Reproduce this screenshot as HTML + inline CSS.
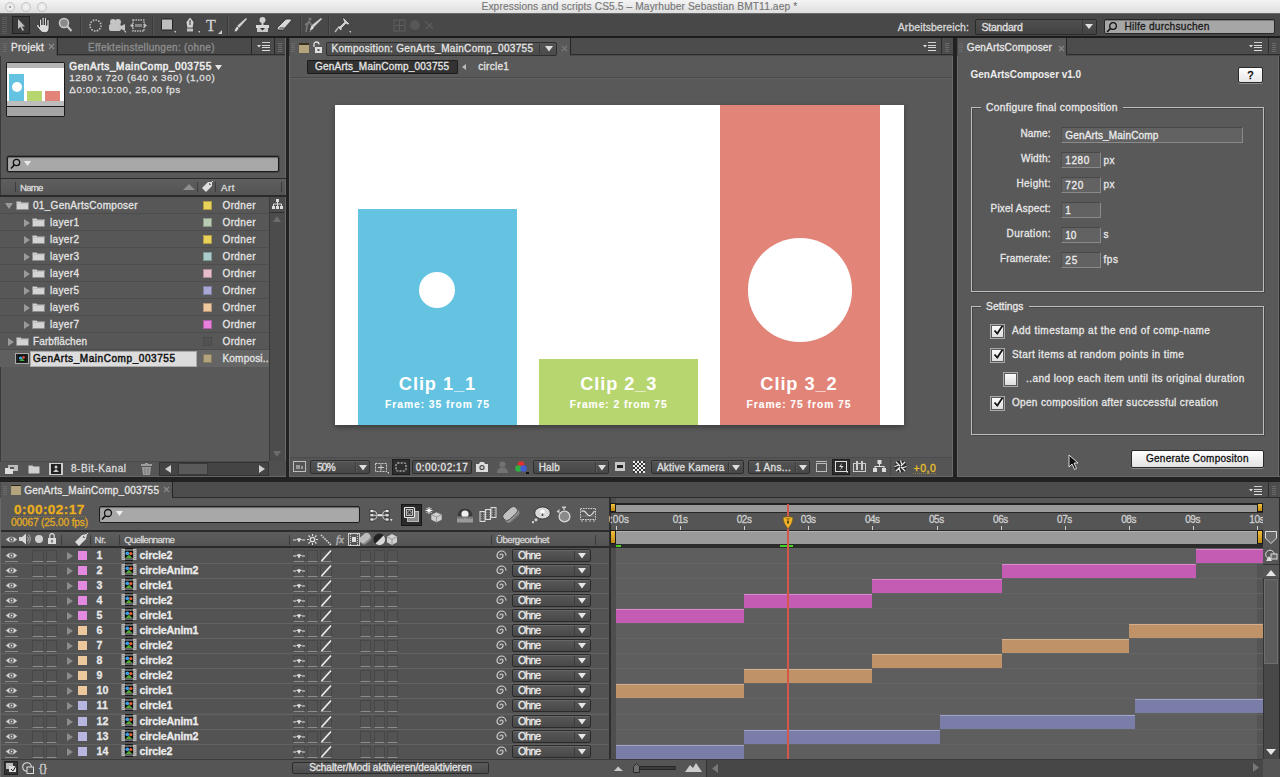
<!DOCTYPE html><html><head><meta charset="utf-8"><style>
html,body{margin:0;padding:0}
body{width:1280px;height:777px;overflow:hidden;background:#222222;position:relative;font-family:"Liberation Sans",sans-serif}
div,svg{position:absolute}
.t{white-space:nowrap;-webkit-text-stroke:0.3px}
</style></head><body>
<div style="left:0px;top:0px;width:1280px;height:13px;background:linear-gradient(#f4f4f4,#dedede);"></div>
<div style="left:0px;top:13px;width:1280px;height:1px;background:#6a6a6a;"></div>
<div class="t" style="left:481.50px;top:1.97px;font-size:10.2px;line-height:10.2px;color:#777777;letter-spacing:0.116px;-webkit-text-stroke:0.15px;">Expressions and scripts CS5.5 – Mayrhuber Sebastian BMT11.aep *</div>
<div style="left:5px;top:2px;width:8px;height:8px;border-radius:50%;border:1px solid #c4c4c4;background:radial-gradient(#f2f2f2,#e2e2e2)"></div>
<div style="left:21px;top:2px;width:8px;height:8px;border-radius:50%;border:1px solid #c4c4c4;background:radial-gradient(#f2f2f2,#e2e2e2)"></div>
<div style="left:37px;top:2px;width:8px;height:8px;border-radius:50%;border:1px solid #c4c4c4;background:radial-gradient(#f2f2f2,#e2e2e2)"></div>
<div style="left:9px;top:6px;width:2px;height:2px;border-radius:50%;background:#888"></div>
<div style="left:0px;top:14px;width:1280px;height:23px;background:#484848;"></div>
<div style="left:0px;top:36px;width:1280px;height:2px;background:#1c1c1c;"></div>
<div style="left:2px;top:17px;width:5px;height:1px;background:#5c5c5c;"></div>
<div style="left:2px;top:19px;width:5px;height:1px;background:#5c5c5c;"></div>
<div style="left:2px;top:21px;width:5px;height:1px;background:#5c5c5c;"></div>
<div style="left:2px;top:23px;width:5px;height:1px;background:#5c5c5c;"></div>
<div style="left:2px;top:25px;width:5px;height:1px;background:#5c5c5c;"></div>
<div style="left:2px;top:27px;width:5px;height:1px;background:#5c5c5c;"></div>
<div style="left:2px;top:29px;width:5px;height:1px;background:#5c5c5c;"></div>
<div style="left:2px;top:31px;width:5px;height:1px;background:#5c5c5c;"></div>
<div style="left:2px;top:33px;width:5px;height:1px;background:#5c5c5c;"></div>
<div style="left:80px;top:16px;width:1px;height:19px;background:#3a3a3a;"></div>
<div style="left:81px;top:16px;width:1px;height:19px;background:#555;"></div>
<div style="left:152px;top:16px;width:1px;height:19px;background:#3a3a3a;"></div>
<div style="left:153px;top:16px;width:1px;height:19px;background:#555;"></div>
<div style="left:227px;top:16px;width:1px;height:19px;background:#3a3a3a;"></div>
<div style="left:228px;top:16px;width:1px;height:19px;background:#555;"></div>
<div style="left:300px;top:16px;width:1px;height:19px;background:#3a3a3a;"></div>
<div style="left:301px;top:16px;width:1px;height:19px;background:#555;"></div>
<div style="left:328px;top:16px;width:1px;height:19px;background:#3a3a3a;"></div>
<div style="left:329px;top:16px;width:1px;height:19px;background:#555;"></div>
<div style="left:12px;top:16px;width:18px;height:18px;background:#3a3a3a;border:1px solid #222;box-sizing:border-box;"></div>
<svg style="left:17px;top:19px;" width="10" height="13" viewBox="0 0 10 13"><path d="M1 0 L1 10 L3.5 8 L5.5 12 L7 11 L5 7.5 L8 7.5 Z" fill="#bdbdbd"/></svg>
<svg style="left:35px;top:16px;" width="17" height="18" viewBox="0 0 17 18"><g fill="#dadada" stroke="#1e1e1e" stroke-width="0.8"><path d="M4.5 11 L4.5 4.2 Q4.5 3 5.7 3 Q6.9 3 6.9 4.2 L6.9 9 L6.9 2.2 Q6.9 1 8.1 1 Q9.3 1 9.3 2.2 L9.3 9 L9.3 2.8 Q9.3 1.6 10.5 1.6 Q11.7 1.6 11.7 2.8 L11.7 9.5 L11.7 4.5 Q11.7 3.4 12.9 3.4 Q14.1 3.4 14.1 4.5 L14.1 11.5 Q14.1 16.8 9.5 16.8 Q6.5 16.8 5 14.5 L1.6 10.2 Q1 9 2.2 8.6 Q3.2 8.3 4.5 10 Z"/></g></svg>
<svg style="left:58px;top:17px;" width="15" height="17" viewBox="0 0 15 17"><circle cx="6" cy="6" r="4.5" fill="#8a8a8a" stroke="#c8c8c8" stroke-width="1.6"/><path d="M9 9 L13.5 14" stroke="#c8c8c8" stroke-width="2"/></svg>
<svg style="left:88px;top:17px;" width="15" height="17" viewBox="0 0 15 17"><circle cx="7.5" cy="8.5" r="5.5" fill="none" stroke="#bbb" stroke-width="1.6" stroke-dasharray="1.6 1.2"/></svg>
<svg style="left:108px;top:17px;" width="19" height="17" viewBox="0 0 19 17"><circle cx="5" cy="5" r="3" fill="#c4c4c4"/><circle cx="10" cy="5" r="3" fill="#c4c4c4"/><rect x="1" y="7" width="12" height="7" rx="2" fill="#c4c4c4"/><path d="M13 9 L17 7 L17 14 L13 12 Z" fill="#c4c4c4"/><path d="M16 14 L18 14 L18 16 Z" fill="#ccc"/></svg>
<svg style="left:130px;top:17px;" width="17" height="17" viewBox="0 0 17 17"><rect x="3" y="3" width="11" height="11" fill="none" stroke="#bbb" stroke-width="1.4" stroke-dasharray="1.5 1"/><rect x="5" y="7" width="7" height="3" fill="#888"/><path d="M0 8.5 L3 6 L3 11 Z M17 8.5 L14 6 L14 11 Z" fill="#bbb"/></svg>
<svg style="left:160px;top:17px;" width="17" height="17" viewBox="0 0 17 17"><rect x="1.5" y="2" width="11" height="11" rx="1" fill="#bdbdbd" stroke="#222" stroke-width="1"/><path d="M14 14 L16 14 L16 16 Z" fill="#ccc"/></svg>
<svg style="left:184px;top:16px;" width="17" height="18" viewBox="0 0 17 18"><path d="M6 1 L10 6 L9 12 L3 12 L2 6 Z" fill="#d0d0d0" stroke="#222" stroke-width="0.6"/><rect x="3" y="12.5" width="6" height="3" fill="#c0c0c0"/><path d="M6 4 L6 9" stroke="#333" stroke-width="1"/><path d="M14 15 L16 15 L16 17 Z" fill="#ccc"/></svg>
<div class="t" style="left:206.00px;top:18.46px;font-size:16px;line-height:16px;color:#d0d0d0;font-family:'Liberation Serif',serif;">T</div>
<svg style="left:218px;top:30px;" width="4" height="4" viewBox="0 0 4 4"><path d="M0 4 L4 4 L4 0 Z" fill="#ccc"/></svg>
<svg style="left:233px;top:17px;" width="15" height="17" viewBox="0 0 15 17"><path d="M13 1 L14 2 L6 11 L4 9 Z" fill="#d0d0d0"/><path d="M4 9 L6 11 Q5 15 1 15 Q2 11 4 9 Z" fill="#e0e0e0" stroke="#222" stroke-width="0.5"/></svg>
<svg style="left:255px;top:16px;" width="15" height="18" viewBox="0 0 15 18"><circle cx="7.5" cy="4" r="3" fill="#d0d0d0"/><rect x="6.5" y="6" width="2" height="3" fill="#ccc"/><rect x="1" y="9" width="13" height="3" fill="#d8d8d8"/><path d="M2 12 L13 12 L13 16 L2 16 Z" fill="#c8c8c8"/><path d="M5 12 L10 12 L7.5 14.5 Z" fill="#333"/></svg>
<svg style="left:276px;top:18px;" width="17" height="14" viewBox="0 0 17 14"><path d="M1 10 L9 2 Q10 1 11 1 L15 1 Q16 2 15 3 L7 12 L2 12 Z" fill="#d8d8d8" stroke="#222" stroke-width="0.7"/><path d="M2 12 L7 12 L9 9 L4 9 Z" fill="#888"/></svg>
<svg style="left:304px;top:16px;" width="19" height="18" viewBox="0 0 19 18"><circle cx="6" cy="3" r="1.6" fill="#777"/><path d="M5 5 L3 10 L2 16 M5 5 L8 10 L6 16 M5 6 L1 9" stroke="#777" stroke-width="1.6" fill="none"/><path d="M17 2 L18 3 L10 11 L8 9 Z" fill="#d0d0d0"/><path d="M8 9 L10 11 Q9 14 6 14 Q7 11 8 9 Z" fill="#e0e0e0"/></svg>
<svg style="left:334px;top:16px;" width="18" height="18" viewBox="0 0 18 18"><path d="M9 1 L16 8 L14 9 L12 8 L8 12 L8 14 L7 15 L3 11 L4 10 L6 10 L10 6 L9 4 Z" fill="#d0d0d0" stroke="#222" stroke-width="0.6"/><path d="M4 12 L1 16" stroke="#bbb" stroke-width="1.4"/><path d="M15 15 L17 15 L17 17 Z" fill="#ccc"/></svg>
<svg style="left:393px;top:19px;" width="13" height="13" viewBox="0 0 13 13"><rect x="1" y="1" width="11" height="11" fill="none" stroke="#5e5e5e"/><path d="M6.5 2 L6.5 11 M2 6.5 L11 6.5" stroke="#5e5e5e"/></svg>
<svg style="left:409px;top:19px;" width="12" height="12" viewBox="0 0 12 12"><circle cx="6" cy="6" r="5" fill="#575757"/></svg>
<svg style="left:423px;top:19px;" width="12" height="13" viewBox="0 0 12 13"><path d="M2 2 L10 10 M3 10 L9 4" stroke="#5a5a5a" stroke-width="1.6"/></svg>
<div class="t" style="left:897.80px;top:21.51px;font-size:10.5px;line-height:10.5px;color:#d8d8d8;letter-spacing:0.069px;">Arbeitsbereich:</div>
<div style="left:975px;top:19px;width:122px;height:16px;background:linear-gradient(#4f4f4f,#434343);border:1px solid #2a2a2a;box-sizing:border-box;border-radius:2px;"></div>
<div style="left:1082px;top:20px;width:1px;height:14px;background:#383838;"></div>
<div class="t" style="left:981.40px;top:21.51px;font-size:10.5px;line-height:10.5px;color:#e0e0e0;letter-spacing:-0.176px;">Standard</div>
<svg style="left:1085px;top:24px;" width="9" height="6" viewBox="0 0 9 6"><path d="M0 0 L8 0 L4 5 Z" fill="#e0e0e0"/></svg>
<div style="left:1104px;top:19px;width:171px;height:15px;background:#a6a6a6;border:1px solid #262626;box-sizing:border-box;border-radius:2px;box-shadow:inset 0 1px 0 #7a7a7a;"></div>
<svg style="left:1106px;top:21px;" width="12" height="12" viewBox="0 0 12 12"><circle cx="7" cy="5" r="3.3" fill="none" stroke="#111" stroke-width="1.3"/><path d="M4.5 7.5 L1 11" stroke="#111" stroke-width="1.6"/></svg>
<div class="t" style="left:1124.50px;top:21.77px;font-size:10.2px;line-height:10.2px;color:#1a1a1a;letter-spacing:0.209px;">Hilfe durchsuchen</div>
<div style="left:0px;top:38px;width:286px;height:439px;background:#595959;"></div>
<div style="left:0px;top:38px;width:286px;height:18px;background:#4a4a4a;"></div>
<div style="left:0px;top:38px;width:56px;height:18px;background:#595959;"></div>
<div style="left:3px;top:43px;width:4px;height:1px;background:#6a6a6a;"></div>
<div style="left:3px;top:45px;width:4px;height:1px;background:#6a6a6a;"></div>
<div style="left:3px;top:47px;width:4px;height:1px;background:#6a6a6a;"></div>
<div style="left:3px;top:49px;width:4px;height:1px;background:#6a6a6a;"></div>
<div style="left:3px;top:51px;width:4px;height:1px;background:#6a6a6a;"></div>
<div class="t" style="left:11.00px;top:43.14px;font-size:10px;line-height:10px;color:#e6e6e6;letter-spacing:0.283px;">Projekt</div>
<svg style="left:48px;top:43px;" width="7" height="7" viewBox="0 0 7 7"><path d="M1 1 L6 6 M6 1 L1 6" stroke="#8c8c8c" stroke-width="1.1"/></svg>
<div style="left:57px;top:38px;width:194px;height:17px;background:#4a4a4a;border-left:1px solid #242424;border-bottom:1px solid #2c2c2c;box-sizing:border-box;"></div>
<div class="t" style="left:88.00px;top:43.14px;font-size:10px;line-height:10px;color:#8e8e8e;letter-spacing:0.296px;">Effekteinstellungen: (ohne)</div>
<div style="left:251px;top:38px;width:24px;height:17px;background:#4b4b4b;border-left:1px solid #282828;border-right:1px solid #282828;border-bottom:1px solid #2c2c2c;box-sizing:border-box;"></div>
<svg style="left:257px;top:42px;" width="14" height="10" viewBox="0 0 14 10"><path d="M0 3 L4 3 L2 5.5 Z" fill="#e0e0e0"/><rect x="5" y="0" width="8" height="1" fill="#cfcfcf"/><rect x="5" y="3" width="8" height="1" fill="#d8d8d8"/><rect x="5" y="5" width="8" height="1" fill="#d8d8d8"/><rect x="5" y="8" width="8" height="1" fill="#e0e0e0"/></svg>
<div style="left:275px;top:38px;width:11px;height:17px;background:#4b4b4b;border-bottom:1px solid #2c2c2c;box-sizing:border-box;"></div>
<div style="left:278px;top:43px;width:4px;height:1px;background:#6a6a6a;"></div>
<div style="left:278px;top:45px;width:4px;height:1px;background:#6a6a6a;"></div>
<div style="left:278px;top:47px;width:4px;height:1px;background:#6a6a6a;"></div>
<div style="left:278px;top:49px;width:4px;height:1px;background:#6a6a6a;"></div>
<div style="left:278px;top:51px;width:4px;height:1px;background:#6a6a6a;"></div>
<div style="left:285px;top:38px;width:1px;height:439px;background:#6a6a6a;"></div>
<div style="left:0px;top:56px;width:1px;height:421px;background:#3a3a3a;"></div>
<div style="left:6px;top:62px;width:59px;height:55px;background:#1a1a1a;border-radius:2px;"></div>
<div style="left:7px;top:63px;width:57px;height:5px;background:#b4b4b4;"></div>
<div style="left:7px;top:68px;width:57px;height:33px;background:#ffffff;"></div>
<div style="left:9px;top:74px;width:15px;height:27px;background:#63c3e0;"></div>
<div style="left:27px;top:91px;width:15px;height:10px;background:#b8d670;"></div>
<div style="left:45px;top:91px;width:15px;height:10px;background:#e28578;"></div>
<div style="left:11.5px;top:82px;width:10px;height:10px;border-radius:50%;background:#fff"></div>
<div style="left:7px;top:101px;width:57px;height:5px;background:#bdbdbd;"></div>
<div style="left:7px;top:107px;width:57px;height:9px;background:#a4a4a4;"></div>
<div class="t" style="left:69.30px;top:61.73px;font-size:10px;line-height:10px;color:#ececec;letter-spacing:0.566px;-webkit-text-stroke:0.55px;">GenArts_MainComp_003755</div>
<svg style="left:215px;top:65px;" width="7" height="5" viewBox="0 0 7 5"><path d="M0 0 L7 0 L3.5 5 Z" fill="#e6e6e6"/></svg>
<div class="t" style="left:69.30px;top:73.20px;font-size:9.8px;line-height:9.8px;color:#dedede;letter-spacing:0.582px;">1280 x 720 (640 x 360) (1,00)</div>
<div class="t" style="left:69.30px;top:84.60px;font-size:9.8px;line-height:9.8px;color:#dedede;letter-spacing:0.589px;">Δ0:00:10:00, 25,00 fps</div>
<div style="left:6px;top:155px;width:274px;height:18px;background:#444;border-radius:3px;"></div>
<div style="left:7px;top:156px;width:272px;height:16px;background:#a8a8a8;border:1px solid #1c1c1c;box-sizing:border-box;border-radius:2px;box-shadow:inset 0 1px 1px #666;"></div>
<svg style="left:10px;top:158px;" width="11" height="12" viewBox="0 0 11 12"><circle cx="6.5" cy="4.5" r="3.2" fill="none" stroke="#111" stroke-width="1.3"/><path d="M4.2 7 L1 10.5" stroke="#111" stroke-width="1.6"/></svg>
<svg style="left:24px;top:161px;" width="7" height="5" viewBox="0 0 7 5"><path d="M0 0 L7 0 L3.5 5 Z" fill="#e8e8e8"/></svg>
<div style="left:0px;top:178px;width:286px;height:1px;background:#2a2a2a;"></div>
<div style="left:1px;top:179px;width:284px;height:16px;background:linear-gradient(#5e5e5e,#545454);"></div>
<div style="left:0px;top:195px;width:286px;height:2px;background:#2b2b2b;"></div>
<div style="left:15px;top:182px;width:1px;height:10px;background:#3c3c3c;"></div>
<div class="t" style="left:20.00px;top:182.87px;font-size:9.6px;line-height:9.6px;color:#dcdcdc;letter-spacing:-0.711px;">Name</div>
<svg style="left:183px;top:183px;" width="12" height="7" viewBox="0 0 12 7"><path d="M0 7 L6 1 L12 7 Z" fill="#8e8e8e"/></svg>
<div style="left:197px;top:182px;width:1px;height:10px;background:#3c3c3c;"></div>
<svg style="left:200px;top:180px;" width="14" height="14" viewBox="0 0 14 14"><path d="M2 8 L8 2 L12 2 L12 6 L6 12 Z" fill="#dedede"/><circle cx="10" cy="4" r="1" fill="#555"/><path d="M10 4 L13 1" stroke="#ddd"/></svg>
<div style="left:215px;top:182px;width:1px;height:10px;background:#3c3c3c;"></div>
<div class="t" style="left:221.00px;top:182.87px;font-size:9.6px;line-height:9.6px;color:#dcdcdc;letter-spacing:0.606px;">Art</div>
<div style="left:281px;top:182px;width:1px;height:10px;background:#3c3c3c;"></div>
<div style="left:0px;top:197px;width:269px;height:17px;background:#575757;"></div>
<div style="left:0px;top:213px;width:269px;height:1px;background:#4d4d4d;"></div>
<svg style="left:5px;top:203px;" width="8" height="6" viewBox="0 0 8 6"><path d="M0 0 L8 0 L4 6 Z" fill="#9a9a9a"/></svg>
<svg style="left:16px;top:200px;" width="13" height="10" viewBox="0 0 13 10"><path d="M0.5 1.5 L4.5 1.5 L5.5 2.5 L12.5 2.5 L12.5 9.5 L0.5 9.5 Z" fill="#d4d4d4" stroke="#8c8c8c" stroke-width="0.8"/><path d="M0.5 3.5 L12.5 3.5" stroke="#bbb" stroke-width="0.8"/></svg>
<div class="t" style="left:33.00px;top:200.73px;font-size:10px;line-height:10px;color:#e4e4e4;letter-spacing:0.294px;">01_GenArtsComposer</div>
<div style="left:203px;top:201px;width:9px;height:9px;background:#e8d25a;border:1px solid rgba(0,0,0,0.25);box-sizing:border-box;"></div>
<div class="t" style="left:222.50px;top:200.73px;font-size:10px;line-height:10px;color:#e4e4e4;letter-spacing:0.380px;">Ordner</div>
<div style="left:0px;top:214px;width:269px;height:17px;background:#575757;"></div>
<div style="left:0px;top:230px;width:269px;height:1px;background:#4d4d4d;"></div>
<svg style="left:24px;top:219px;" width="6" height="8" viewBox="0 0 6 8"><path d="M0 0 L6 4 L0 8 Z" fill="#9a9a9a"/></svg>
<svg style="left:32px;top:217px;" width="13" height="10" viewBox="0 0 13 10"><path d="M0.5 1.5 L4.5 1.5 L5.5 2.5 L12.5 2.5 L12.5 9.5 L0.5 9.5 Z" fill="#d4d4d4" stroke="#8c8c8c" stroke-width="0.8"/><path d="M0.5 3.5 L12.5 3.5" stroke="#bbb" stroke-width="0.8"/></svg>
<div class="t" style="left:50.00px;top:217.73px;font-size:10px;line-height:10px;color:#e4e4e4;letter-spacing:0.350px;">layer1</div>
<div style="left:203px;top:218px;width:9px;height:9px;background:#b8cbb3;border:1px solid rgba(0,0,0,0.25);box-sizing:border-box;"></div>
<div class="t" style="left:222.50px;top:217.73px;font-size:10px;line-height:10px;color:#e4e4e4;letter-spacing:0.380px;">Ordner</div>
<div style="left:0px;top:231px;width:269px;height:17px;background:#575757;"></div>
<div style="left:0px;top:247px;width:269px;height:1px;background:#4d4d4d;"></div>
<svg style="left:24px;top:236px;" width="6" height="8" viewBox="0 0 6 8"><path d="M0 0 L6 4 L0 8 Z" fill="#9a9a9a"/></svg>
<svg style="left:32px;top:234px;" width="13" height="10" viewBox="0 0 13 10"><path d="M0.5 1.5 L4.5 1.5 L5.5 2.5 L12.5 2.5 L12.5 9.5 L0.5 9.5 Z" fill="#d4d4d4" stroke="#8c8c8c" stroke-width="0.8"/><path d="M0.5 3.5 L12.5 3.5" stroke="#bbb" stroke-width="0.8"/></svg>
<div class="t" style="left:50.00px;top:234.73px;font-size:10px;line-height:10px;color:#e4e4e4;letter-spacing:0.350px;">layer2</div>
<div style="left:203px;top:235px;width:9px;height:9px;background:#e8d25a;border:1px solid rgba(0,0,0,0.25);box-sizing:border-box;"></div>
<div class="t" style="left:222.50px;top:234.73px;font-size:10px;line-height:10px;color:#e4e4e4;letter-spacing:0.380px;">Ordner</div>
<div style="left:0px;top:248px;width:269px;height:17px;background:#575757;"></div>
<div style="left:0px;top:264px;width:269px;height:1px;background:#4d4d4d;"></div>
<svg style="left:24px;top:253px;" width="6" height="8" viewBox="0 0 6 8"><path d="M0 0 L6 4 L0 8 Z" fill="#9a9a9a"/></svg>
<svg style="left:32px;top:251px;" width="13" height="10" viewBox="0 0 13 10"><path d="M0.5 1.5 L4.5 1.5 L5.5 2.5 L12.5 2.5 L12.5 9.5 L0.5 9.5 Z" fill="#d4d4d4" stroke="#8c8c8c" stroke-width="0.8"/><path d="M0.5 3.5 L12.5 3.5" stroke="#bbb" stroke-width="0.8"/></svg>
<div class="t" style="left:50.00px;top:251.73px;font-size:10px;line-height:10px;color:#e4e4e4;letter-spacing:0.350px;">layer3</div>
<div style="left:203px;top:252px;width:9px;height:9px;background:#a9cdc8;border:1px solid rgba(0,0,0,0.25);box-sizing:border-box;"></div>
<div class="t" style="left:222.50px;top:251.73px;font-size:10px;line-height:10px;color:#e4e4e4;letter-spacing:0.380px;">Ordner</div>
<div style="left:0px;top:265px;width:269px;height:17px;background:#575757;"></div>
<div style="left:0px;top:281px;width:269px;height:1px;background:#4d4d4d;"></div>
<svg style="left:24px;top:270px;" width="6" height="8" viewBox="0 0 6 8"><path d="M0 0 L6 4 L0 8 Z" fill="#9a9a9a"/></svg>
<svg style="left:32px;top:268px;" width="13" height="10" viewBox="0 0 13 10"><path d="M0.5 1.5 L4.5 1.5 L5.5 2.5 L12.5 2.5 L12.5 9.5 L0.5 9.5 Z" fill="#d4d4d4" stroke="#8c8c8c" stroke-width="0.8"/><path d="M0.5 3.5 L12.5 3.5" stroke="#bbb" stroke-width="0.8"/></svg>
<div class="t" style="left:50.00px;top:268.74px;font-size:10px;line-height:10px;color:#e4e4e4;letter-spacing:0.350px;">layer4</div>
<div style="left:203px;top:269px;width:9px;height:9px;background:#e7bdc9;border:1px solid rgba(0,0,0,0.25);box-sizing:border-box;"></div>
<div class="t" style="left:222.50px;top:268.74px;font-size:10px;line-height:10px;color:#e4e4e4;letter-spacing:0.380px;">Ordner</div>
<div style="left:0px;top:282px;width:269px;height:17px;background:#575757;"></div>
<div style="left:0px;top:298px;width:269px;height:1px;background:#4d4d4d;"></div>
<svg style="left:24px;top:287px;" width="6" height="8" viewBox="0 0 6 8"><path d="M0 0 L6 4 L0 8 Z" fill="#9a9a9a"/></svg>
<svg style="left:32px;top:285px;" width="13" height="10" viewBox="0 0 13 10"><path d="M0.5 1.5 L4.5 1.5 L5.5 2.5 L12.5 2.5 L12.5 9.5 L0.5 9.5 Z" fill="#d4d4d4" stroke="#8c8c8c" stroke-width="0.8"/><path d="M0.5 3.5 L12.5 3.5" stroke="#bbb" stroke-width="0.8"/></svg>
<div class="t" style="left:50.00px;top:285.74px;font-size:10px;line-height:10px;color:#e4e4e4;letter-spacing:0.350px;">layer5</div>
<div style="left:203px;top:286px;width:9px;height:9px;background:#a8a8d6;border:1px solid rgba(0,0,0,0.25);box-sizing:border-box;"></div>
<div class="t" style="left:222.50px;top:285.74px;font-size:10px;line-height:10px;color:#e4e4e4;letter-spacing:0.380px;">Ordner</div>
<div style="left:0px;top:299px;width:269px;height:17px;background:#575757;"></div>
<div style="left:0px;top:315px;width:269px;height:1px;background:#4d4d4d;"></div>
<svg style="left:24px;top:304px;" width="6" height="8" viewBox="0 0 6 8"><path d="M0 0 L6 4 L0 8 Z" fill="#9a9a9a"/></svg>
<svg style="left:32px;top:302px;" width="13" height="10" viewBox="0 0 13 10"><path d="M0.5 1.5 L4.5 1.5 L5.5 2.5 L12.5 2.5 L12.5 9.5 L0.5 9.5 Z" fill="#d4d4d4" stroke="#8c8c8c" stroke-width="0.8"/><path d="M0.5 3.5 L12.5 3.5" stroke="#bbb" stroke-width="0.8"/></svg>
<div class="t" style="left:50.00px;top:302.74px;font-size:10px;line-height:10px;color:#e4e4e4;letter-spacing:0.350px;">layer6</div>
<div style="left:203px;top:303px;width:9px;height:9px;background:#efc79d;border:1px solid rgba(0,0,0,0.25);box-sizing:border-box;"></div>
<div class="t" style="left:222.50px;top:302.74px;font-size:10px;line-height:10px;color:#e4e4e4;letter-spacing:0.380px;">Ordner</div>
<div style="left:0px;top:316px;width:269px;height:17px;background:#575757;"></div>
<div style="left:0px;top:332px;width:269px;height:1px;background:#4d4d4d;"></div>
<svg style="left:24px;top:321px;" width="6" height="8" viewBox="0 0 6 8"><path d="M0 0 L6 4 L0 8 Z" fill="#9a9a9a"/></svg>
<svg style="left:32px;top:319px;" width="13" height="10" viewBox="0 0 13 10"><path d="M0.5 1.5 L4.5 1.5 L5.5 2.5 L12.5 2.5 L12.5 9.5 L0.5 9.5 Z" fill="#d4d4d4" stroke="#8c8c8c" stroke-width="0.8"/><path d="M0.5 3.5 L12.5 3.5" stroke="#bbb" stroke-width="0.8"/></svg>
<div class="t" style="left:50.00px;top:319.74px;font-size:10px;line-height:10px;color:#e4e4e4;letter-spacing:0.350px;">layer7</div>
<div style="left:203px;top:320px;width:9px;height:9px;background:#e77fdc;border:1px solid rgba(0,0,0,0.25);box-sizing:border-box;"></div>
<div class="t" style="left:222.50px;top:319.74px;font-size:10px;line-height:10px;color:#e4e4e4;letter-spacing:0.380px;">Ordner</div>
<div style="left:0px;top:333px;width:269px;height:17px;background:#575757;"></div>
<div style="left:0px;top:349px;width:269px;height:1px;background:#4d4d4d;"></div>
<svg style="left:8px;top:338px;" width="6" height="8" viewBox="0 0 6 8"><path d="M0 0 L6 4 L0 8 Z" fill="#9a9a9a"/></svg>
<svg style="left:16px;top:336px;" width="13" height="10" viewBox="0 0 13 10"><path d="M0.5 1.5 L4.5 1.5 L5.5 2.5 L12.5 2.5 L12.5 9.5 L0.5 9.5 Z" fill="#d4d4d4" stroke="#8c8c8c" stroke-width="0.8"/><path d="M0.5 3.5 L12.5 3.5" stroke="#bbb" stroke-width="0.8"/></svg>
<div class="t" style="left:33.00px;top:336.74px;font-size:10px;line-height:10px;color:#e4e4e4;letter-spacing:0.120px;">Farbflächen</div>
<div style="left:203px;top:337px;width:9px;height:9px;background:#525252;border:1px solid #4a4a4a;box-sizing:border-box;"></div>
<div class="t" style="left:222.50px;top:336.74px;font-size:10px;line-height:10px;color:#e4e4e4;letter-spacing:0.380px;">Ordner</div>
<div style="left:0px;top:350px;width:269px;height:17px;background:#575757;"></div>
<div style="left:0px;top:366px;width:269px;height:1px;background:#4d4d4d;"></div>
<div style="left:0px;top:350px;width:269px;height:17px;background:#5f5f5f;"></div>
<div style="left:30px;top:351px;width:167px;height:16px;background:#dcdcdc;border:1px solid #aaa;box-sizing:border-box;"></div>
<div style="left:197px;top:350px;width:72px;height:17px;background:#656565;"></div>
<svg style="left:15px;top:353px;" width="14" height="11" viewBox="0 0 14 11"><rect x="0.5" y="0.5" width="13" height="10" fill="#222" stroke="#aaa"/><rect x="3" y="2" width="8" height="7" fill="#111"/><circle cx="5.5" cy="5" r="1.6" fill="#3ab0e0"/><circle cx="8.5" cy="4.5" r="1.4" fill="#e05040"/><path d="M4 8 L7 5.5 L10 8 Z" fill="#40b040"/></svg>
<div class="t" style="left:33.00px;top:353.74px;font-size:10px;line-height:10px;color:#111111;letter-spacing:0.566px;-webkit-text-stroke:0.45px;">GenArts_MainComp_003755</div>
<div style="left:203px;top:354px;width:9px;height:9px;background:#b3a47e;border:1px solid rgba(0,0,0,0.25);box-sizing:border-box;"></div>
<div class="t" style="left:222.50px;top:353.74px;font-size:10px;line-height:10px;color:#e4e4e4;letter-spacing:0.194px;">Komposi..</div>
<div style="left:269px;top:197px;width:16px;height:264px;background:#4c4c4c;border-left:1px solid #3a3a3a;box-sizing:border-box;"></div>
<svg style="left:272px;top:199px;" width="11" height="11" viewBox="0 0 11 11"><rect x="4" y="0" width="3" height="3" fill="#ddd"/><path d="M5.5 3 L5.5 5 M1.5 5 L9.5 5 M1.5 5 L1.5 7 M5.5 5 L5.5 7 M9.5 5 L9.5 7" stroke="#ddd"/><rect x="0" y="7" width="3" height="3" fill="#ddd"/><rect x="4" y="7" width="3" height="3" fill="#ddd"/><rect x="8" y="7" width="3" height="3" fill="#ddd"/></svg>
<div style="left:270px;top:212px;width:14px;height:1px;background:#2e2e2e;"></div>
<svg style="left:273px;top:216px;" width="8" height="6" viewBox="0 0 8 6"><path d="M0 6 L4 0 L8 6 Z" fill="#6c6c6c"/></svg>
<svg style="left:273px;top:451px;" width="8" height="6" viewBox="0 0 8 6"><path d="M0 0 L4 6 L8 0 Z" fill="#6c6c6c"/></svg>
<div style="left:0px;top:461px;width:286px;height:16px;background:#555;border-top:1px solid #4a4a4a;box-sizing:border-box;"></div>
<svg style="left:5px;top:464px;" width="14" height="10" viewBox="0 0 14 10"><rect x="3" y="1" width="10" height="6" fill="#bbb"/><rect x="0" y="4" width="8" height="6" fill="#ddd"/><rect x="5" y="3" width="4" height="2" fill="#555"/></svg>
<svg style="left:28px;top:464px;" width="12" height="10" viewBox="0 0 12 10"><path d="M0.5 1.5 L4.5 1.5 L5.5 2.5 L11.5 2.5 L11.5 9.5 L0.5 9.5 Z" fill="#cfcfcf"/></svg>
<svg style="left:49px;top:463px;" width="14" height="12" viewBox="0 0 14 12"><rect x="0" y="0" width="14" height="12" fill="#ccc"/><rect x="2" y="1" width="10" height="10" fill="#222"/><path d="M4 9 L7 6 L10 9 Z" fill="#ccc"/><circle cx="7" cy="4" r="1.5" fill="#ccc"/></svg>
<div class="t" style="left:71.00px;top:464.04px;font-size:10px;line-height:10px;color:#dcdcdc;letter-spacing:0.555px;">8-Bit-Kanal</div>
<svg style="left:141px;top:463px;" width="11" height="12" viewBox="0 0 11 12"><rect x="0" y="1" width="11" height="2" fill="#9c9c9c"/><rect x="4" y="0" width="3" height="1" fill="#9c9c9c"/><path d="M1 4 L10 4 L9 12 L2 12 Z" fill="#9c9c9c"/><path d="M4 5 L4 11 M7 5 L7 11" stroke="#777"/></svg>
<div style="left:159px;top:462px;width:110px;height:14px;background:#444;border:1px solid #333;box-sizing:border-box;"></div>
<svg style="left:165px;top:465px;" width="6" height="8" viewBox="0 0 6 8"><path d="M6 0 L0 4 L6 8 Z" fill="#d0d0d0"/></svg>
<div style="left:178px;top:463px;width:30px;height:12px;background:#5a5a5a;border:1px solid #3a3a3a;box-sizing:border-box;"></div>
<svg style="left:259px;top:465px;" width="6" height="8" viewBox="0 0 6 8"><path d="M0 0 L6 4 L0 8 Z" fill="#d0d0d0"/></svg>
<div style="left:269px;top:461px;width:16px;height:16px;background:#4f4f4f;"></div>
<div style="left:289px;top:38px;width:664px;height:439px;background:#595959;"></div>
<div style="left:289px;top:38px;width:1px;height:439px;background:#6a6a6a;"></div>
<div style="left:952px;top:38px;width:1px;height:439px;background:#6a6a6a;"></div>
<div style="left:289px;top:38px;width:664px;height:18px;background:#4a4a4a;"></div>
<div style="left:290px;top:38px;width:280px;height:18px;background:#595959;"></div>
<div style="left:570px;top:38px;width:383px;height:17px;background:#4c4c4c;border-left:1px solid #242424;border-bottom:1px solid #2c2c2c;box-sizing:border-box;"></div>
<div style="left:291px;top:43px;width:4px;height:1px;background:#6a6a6a;"></div>
<div style="left:291px;top:45px;width:4px;height:1px;background:#6a6a6a;"></div>
<div style="left:291px;top:47px;width:4px;height:1px;background:#6a6a6a;"></div>
<div style="left:291px;top:49px;width:4px;height:1px;background:#6a6a6a;"></div>
<div style="left:291px;top:51px;width:4px;height:1px;background:#6a6a6a;"></div>
<div style="left:299px;top:43px;width:10px;height:10px;background:#b3a47e;border-top:2px solid #3a3020;box-sizing:border-box;"></div>
<svg style="left:312px;top:41px;" width="10" height="13" viewBox="0 0 10 13"><path d="M2 6 L2 3.5 Q2 1 4.5 1 Q7 1 7 3.5" fill="none" stroke="#e0e0e0" stroke-width="1.3"/><rect x="3" y="6" width="7" height="6" fill="#e0e0e0"/><rect x="5.5" y="8" width="2" height="2" fill="#555"/></svg>
<div style="left:326px;top:42px;width:231px;height:14px;background:linear-gradient(#555,#4a4a4a);border:1px solid #2e2e2e;box-sizing:border-box;border-radius:2px;"></div>
<div style="left:539px;top:44px;width:1px;height:10px;background:#3a3a3a;"></div>
<svg style="left:545px;top:46px;" width="9" height="6" viewBox="0 0 9 6"><path d="M0 0 L8 0 L4 5.5 Z" fill="#e0e0e0"/></svg>
<div class="t" style="left:331.40px;top:43.83px;font-size:10px;line-height:10px;color:#e4e4e4;letter-spacing:0.329px;">Komposition: GenArts_MainComp_003755</div>
<svg style="left:561px;top:45px;" width="7" height="7" viewBox="0 0 7 7"><path d="M1 1 L6 6 M6 1 L1 6" stroke="#7a7a7a" stroke-width="1.1"/></svg>
<div style="left:941px;top:38px;width:1px;height:17px;background:#2a2a2a;"></div>
<svg style="left:923px;top:42px;" width="14" height="10" viewBox="0 0 14 10"><path d="M0 3 L4 3 L2 5.5 Z" fill="#e0e0e0"/><rect x="5" y="0" width="8" height="1" fill="#cfcfcf"/><rect x="5" y="3" width="8" height="1" fill="#d8d8d8"/><rect x="5" y="5" width="8" height="1" fill="#d8d8d8"/><rect x="5" y="8" width="8" height="1" fill="#e0e0e0"/></svg>
<div style="left:945px;top:43px;width:4px;height:1px;background:#6a6a6a;"></div>
<div style="left:945px;top:45px;width:4px;height:1px;background:#6a6a6a;"></div>
<div style="left:945px;top:47px;width:4px;height:1px;background:#6a6a6a;"></div>
<div style="left:945px;top:49px;width:4px;height:1px;background:#6a6a6a;"></div>
<div style="left:945px;top:51px;width:4px;height:1px;background:#6a6a6a;"></div>
<div style="left:307px;top:60px;width:151px;height:14px;background:#333;border:1px solid #1c1c1c;box-sizing:border-box;border-radius:1px;"></div>
<div class="t" style="left:315.00px;top:62.33px;font-size:10px;line-height:10px;color:#e6e6e6;letter-spacing:0.202px;">GenArts_MainComp_003755</div>
<svg style="left:462px;top:64px;" width="4" height="6" viewBox="0 0 4 6"><path d="M4 0 L0 3 L4 6 Z" fill="#bbb"/></svg>
<div class="t" style="left:478.30px;top:62.33px;font-size:10px;line-height:10px;color:#e6e6e6;letter-spacing:0.267px;">circle1</div>
<div style="left:290px;top:77px;width:662px;height:1px;background:#4a4a4a;"></div>
<div style="left:290px;top:78px;width:662px;height:1px;background:#626262;"></div>
<div style="left:335px;top:105px;width:569px;height:320px;background:#ffffff;box-shadow:0 2px 5px rgba(0,0,0,0.35);"></div>
<div style="left:358px;top:209px;width:159px;height:216px;background:#63c3e0;"></div>
<div style="left:539px;top:359px;width:159px;height:66px;background:#b8d670;"></div>
<div style="left:720px;top:105px;width:160px;height:320px;background:#e28578;"></div>
<div style="left:419.3px;top:272px;width:36px;height:36px;border-radius:50%;background:#fff"></div>
<div style="left:748.4px;top:238.4px;width:103.2px;height:103.2px;border-radius:50%;background:#fff"></div>
<div class="t" style="left:398.85px;top:375.39px;font-size:18.2px;line-height:18.2px;color:#ffffff;font-weight:bold;letter-spacing:0.929px;-webkit-text-stroke:0;">Clip 1_1</div>
<div class="t" style="left:385.00px;top:399.58px;font-size:10.3px;line-height:10.3px;color:#ffffff;font-weight:bold;letter-spacing:0.954px;-webkit-text-stroke:0.1px;">Frame: 35 from 75</div>
<div class="t" style="left:580.15px;top:375.39px;font-size:18.2px;line-height:18.2px;color:#ffffff;font-weight:bold;letter-spacing:0.929px;-webkit-text-stroke:0;">Clip 2_3</div>
<div class="t" style="left:569.80px;top:399.58px;font-size:10.3px;line-height:10.3px;color:#ffffff;font-weight:bold;letter-spacing:0.932px;-webkit-text-stroke:0.1px;">Frame: 2 from 75</div>
<div class="t" style="left:760.35px;top:375.39px;font-size:18.2px;line-height:18.2px;color:#ffffff;font-weight:bold;letter-spacing:0.929px;-webkit-text-stroke:0;">Clip 3_2</div>
<div class="t" style="left:746.50px;top:399.58px;font-size:10.3px;line-height:10.3px;color:#ffffff;font-weight:bold;letter-spacing:0.954px;-webkit-text-stroke:0.1px;">Frame: 75 from 75</div>
<div style="left:290px;top:457px;width:662px;height:1px;background:#4c4c4c;"></div>
<div style="left:290px;top:458px;width:662px;height:19px;background:#555;"></div>
<div style="left:290px;top:476px;width:662px;height:1px;background:#4a4a4a;"></div>
<svg style="left:293px;top:461px;" width="13" height="12" viewBox="0 0 13 12"><rect x="0.5" y="0.5" width="12" height="10" fill="none" stroke="#bdbdbd"/><rect x="3" y="4" width="4" height="4" fill="#999"/><rect x="8" y="5" width="2" height="3" fill="#999"/></svg>
<div style="left:310px;top:460px;width:60px;height:14px;background:linear-gradient(#535353,#474747);border:1px solid #2e2e2e;box-sizing:border-box;border-radius:2px;box-shadow:inset 0 1px 0 #5e5e5e;"></div>
<div style="left:355px;top:462px;width:1px;height:10px;background:#3a3a3a;"></div>
<div style="left:356px;top:462px;width:1px;height:10px;background:#5a5a5a;"></div>
<svg style="left:358.5px;top:464.5px;" width="8" height="6" viewBox="0 0 8 6"><path d="M0 0 L8 0 L4 5.5 Z" fill="#dedede"/></svg>
<div class="t" style="left:316.90px;top:462.54px;font-size:10px;line-height:10px;color:#e0e0e0;letter-spacing:-0.650px;">50%</div>
<svg style="left:374px;top:461px;" width="15" height="13" viewBox="0 0 15 13"><rect x="1.5" y="2.5" width="11" height="8" fill="none" stroke="#ccc" stroke-dasharray="2 1"/><path d="M4 6.5 L10 6.5 M7 3.5 L7 9.5" stroke="#ccc"/><path d="M13 11 L15 11 L15 13 Z" fill="#ccc"/></svg>
<div style="left:392px;top:459px;width:18px;height:16px;background:#2e2e2e;border:1px solid #1e1e1e;box-sizing:border-box;"></div>
<svg style="left:395px;top:462px;" width="12" height="10" viewBox="0 0 12 10"><rect x="1" y="1" width="10" height="8" rx="1.5" fill="none" stroke="#e0e0e0" stroke-dasharray="2 1.2"/></svg>
<div style="left:412px;top:460px;width:60px;height:14px;background:#4a4a4a;border:1px solid #2e2e2e;box-sizing:border-box;border-radius:2px;"></div>
<div class="t" style="left:415.70px;top:462.54px;font-size:10px;line-height:10px;color:#e4e4e4;letter-spacing:0.528px;">0:00:02:17</div>
<svg style="left:476px;top:461px;" width="12" height="11" viewBox="0 0 12 11"><path d="M0 3 L3 3 L4 1 L8 1 L9 3 L12 3 L12 11 L0 11 Z" fill="#dcdcdc"/><circle cx="6" cy="6.5" r="2.6" fill="#444"/><circle cx="6" cy="6.5" r="1.5" fill="#cfcfcf"/></svg>
<svg style="left:497px;top:461px;" width="11" height="12" viewBox="0 0 11 12"><circle cx="5.5" cy="3.5" r="3" fill="#727272"/><path d="M0 12 Q0 6.5 5.5 6.5 Q11 6.5 11 12 Z" fill="#727272"/></svg>
<svg style="left:514px;top:460px;" width="15" height="14" viewBox="0 0 15 14"><circle cx="7" cy="4.5" r="3.3" fill="#e03030"/><circle cx="4.5" cy="8.5" r="3.3" fill="#30b040"/><circle cx="9.5" cy="8.5" r="3.3" fill="#4060e0" fill-opacity="0.9"/><path d="M12 12 L15 12 L15 14 L12 14 Z" fill="#111"/></svg>
<div style="left:533px;top:460px;width:76px;height:14px;background:linear-gradient(#535353,#474747);border:1px solid #2e2e2e;box-sizing:border-box;border-radius:2px;box-shadow:inset 0 1px 0 #5e5e5e;"></div>
<div style="left:595px;top:462px;width:1px;height:10px;background:#3a3a3a;"></div>
<div style="left:596px;top:462px;width:1px;height:10px;background:#5a5a5a;"></div>
<svg style="left:598.0px;top:464.5px;" width="8" height="6" viewBox="0 0 8 6"><path d="M0 0 L8 0 L4 5.5 Z" fill="#dedede"/></svg>
<div class="t" style="left:538.75px;top:462.54px;font-size:10px;line-height:10px;color:#e0e0e0;letter-spacing:0.150px;">Halb</div>
<div style="left:614px;top:461px;width:12px;height:11px;background:#c8c8c8;border:1px solid #555;box-sizing:border-box;"></div>
<div style="left:617px;top:465px;width:6px;height:3px;background:#222;"></div>
<div style="left:633px;top:461px;width:12px;height:12px;background-color:#eee;background-image:linear-gradient(45deg,#333 25%,transparent 25%,transparent 75%,#333 75%),linear-gradient(45deg,#333 25%,transparent 25%,transparent 75%,#333 75%);background-size:4px 4px;background-position:0 0,2px 2px;"></div>
<div style="left:651px;top:460px;width:93px;height:14px;background:linear-gradient(#535353,#474747);border:1px solid #2e2e2e;box-sizing:border-box;border-radius:2px;box-shadow:inset 0 1px 0 #5e5e5e;"></div>
<div style="left:728px;top:462px;width:1px;height:10px;background:#3a3a3a;"></div>
<div style="left:729px;top:462px;width:1px;height:10px;background:#5a5a5a;"></div>
<svg style="left:732.0px;top:464.5px;" width="8" height="6" viewBox="0 0 8 6"><path d="M0 0 L8 0 L4 5.5 Z" fill="#dedede"/></svg>
<div class="t" style="left:656.90px;top:462.54px;font-size:10px;line-height:10px;color:#e0e0e0;letter-spacing:0.204px;">Aktive Kamera</div>
<div style="left:748px;top:460px;width:62px;height:14px;background:linear-gradient(#535353,#474747);border:1px solid #2e2e2e;box-sizing:border-box;border-radius:2px;box-shadow:inset 0 1px 0 #5e5e5e;"></div>
<div style="left:795px;top:462px;width:1px;height:10px;background:#3a3a3a;"></div>
<div style="left:796px;top:462px;width:1px;height:10px;background:#5a5a5a;"></div>
<svg style="left:798.5px;top:464.5px;" width="8" height="6" viewBox="0 0 8 6"><path d="M0 0 L8 0 L4 5.5 Z" fill="#dedede"/></svg>
<div class="t" style="left:755.10px;top:462.54px;font-size:10px;line-height:10px;color:#e0e0e0;letter-spacing:0.321px;">1 Ans...</div>
<svg style="left:816px;top:461px;" width="11" height="11" viewBox="0 0 11 11"><rect x="0.5" y="2.5" width="10" height="8" fill="none" stroke="#bbb"/><path d="M0 0.5 L11 0.5" stroke="#bbb"/></svg>
<div style="left:832px;top:459px;width:18px;height:16px;background:#2e2e2e;border:1px solid #1e1e1e;box-sizing:border-box;"></div>
<svg style="left:835px;top:461px;" width="13" height="12" viewBox="0 0 13 12"><rect x="0.5" y="0.5" width="11" height="10" fill="none" stroke="#ddd"/><path d="M7 2 L4 6 L6.5 6 L5 9.5 L8.5 5 L6 5 Z" fill="#ddd"/><path d="M10 10 L13 10 L13 12 Z" fill="#ddd"/></svg>
<svg style="left:853px;top:461px;" width="13" height="11" viewBox="0 0 13 11"><rect x="0.5" y="2.5" width="12" height="8" fill="none" stroke="#ccc"/><rect x="3" y="0" width="2" height="9" fill="#ccc"/><rect x="8" y="0" width="2" height="9" fill="#ccc"/></svg>
<svg style="left:873px;top:460px;" width="13" height="13" viewBox="0 0 13 13"><rect x="4.5" y="0" width="4" height="4" fill="#ddd"/><path d="M6.5 4 L6.5 6 M2 6.5 L11 6.5 M2 6 L2 8 M11 6 L11 8" stroke="#ddd"/><rect x="0" y="8" width="4" height="4" fill="#ddd"/><rect x="9" y="8" width="4" height="4" fill="#ddd"/></svg>
<div style="left:890px;top:459px;width:1px;height:17px;background:#474747;"></div>
<svg style="left:894px;top:460px;" width="13" height="13" viewBox="0 0 13 13"><circle cx="6.5" cy="6.5" r="6" fill="#2a2a2a"/><path d="M6.5 0.5 L8 5 M12.5 6.5 L8 8 M6.5 12.5 L5 8 M0.5 6.5 L5 5 M2 2 L6 6 M11 11 L7 7 M11 2 L7 6 M2 11 L6 7" stroke="#e8e8e8" stroke-width="1.2"/></svg>
<div class="t" style="left:913.60px;top:462.61px;font-size:10.5px;line-height:10.5px;color:#ecc02a;letter-spacing:0.521px;">+0,0</div>
<div style="left:913px;top:473px;width:23px;height:1px;background:repeating-linear-gradient(90deg,rgba(200,160,40,0.5) 0 1px,transparent 1px 2px);"></div>
<div style="left:957px;top:38px;width:323px;height:439px;background:#595959;"></div>
<div style="left:957px;top:38px;width:1px;height:439px;background:#6a6a6a;"></div>
<div style="left:1278px;top:38px;width:1px;height:439px;background:#6a6a6a;"></div>
<div style="left:1279px;top:38px;width:1px;height:439px;background:#2a2a2a;"></div>
<div style="left:957px;top:38px;width:323px;height:18px;background:#4a4a4a;"></div>
<div style="left:958px;top:38px;width:108px;height:18px;background:#595959;"></div>
<div style="left:1066px;top:38px;width:214px;height:17px;background:#4c4c4c;border-left:1px solid #242424;border-bottom:1px solid #2c2c2c;box-sizing:border-box;"></div>
<div style="left:959px;top:43px;width:4px;height:1px;background:#6a6a6a;"></div>
<div style="left:959px;top:45px;width:4px;height:1px;background:#6a6a6a;"></div>
<div style="left:959px;top:47px;width:4px;height:1px;background:#6a6a6a;"></div>
<div style="left:959px;top:49px;width:4px;height:1px;background:#6a6a6a;"></div>
<div style="left:959px;top:51px;width:4px;height:1px;background:#6a6a6a;"></div>
<div class="t" style="left:966.70px;top:43.14px;font-size:10px;line-height:10px;color:#e6e6e6;letter-spacing:0.171px;">GenArtsComposer</div>
<svg style="left:1058px;top:45px;" width="7" height="7" viewBox="0 0 7 7"><path d="M1 1 L6 6 M6 1 L1 6" stroke="#8a8a8a" stroke-width="1.1"/></svg>
<svg style="left:1249px;top:42px;" width="14" height="10" viewBox="0 0 14 10"><path d="M0 3 L4 3 L2 5.5 Z" fill="#e0e0e0"/><rect x="5" y="0" width="8" height="1" fill="#cfcfcf"/><rect x="5" y="3" width="8" height="1" fill="#d8d8d8"/><rect x="5" y="5" width="8" height="1" fill="#d8d8d8"/><rect x="5" y="8" width="8" height="1" fill="#e0e0e0"/></svg>
<div style="left:1268px;top:38px;width:1px;height:17px;background:#2c2c2c;"></div>
<div style="left:1272px;top:43px;width:4px;height:1px;background:#6a6a6a;"></div>
<div style="left:1272px;top:45px;width:4px;height:1px;background:#6a6a6a;"></div>
<div style="left:1272px;top:47px;width:4px;height:1px;background:#6a6a6a;"></div>
<div style="left:1272px;top:49px;width:4px;height:1px;background:#6a6a6a;"></div>
<div style="left:1272px;top:51px;width:4px;height:1px;background:#6a6a6a;"></div>
<div class="t" style="left:970.60px;top:70.03px;font-size:10px;line-height:10px;color:#ececec;font-weight:bold;letter-spacing:-0.034px;-webkit-text-stroke:0.05px;">GenArtsComposer v1.0</div>
<div style="left:1238px;top:67px;width:25px;height:16px;background:linear-gradient(#ffffff,#e6e6e6);border:1px solid #2a2a2a;box-sizing:border-box;border-radius:2px;box-shadow:0 1px 0 #8a8a8a;"></div>
<div class="t" style="left:1247.59px;top:69.61px;font-size:10.5px;line-height:10.5px;color:#111;-webkit-text-stroke:0.5px;">?</div>
<div style="left:971px;top:107px;width:293px;height:185px;border:1px solid #bdbdbd;box-sizing:border-box;box-shadow:inset 1px 1px 0 #454545, 1px 1px 0 #454545;"></div>
<div style="left:981px;top:104px;width:141.6px;height:6px;background:#595959;"></div>
<div class="t" style="left:986.00px;top:103.08px;font-size:10.3px;line-height:10.3px;color:#e8e8e8;letter-spacing:0.284px;">Configure final composition</div>
<div class="t" style="left:1020.50px;top:129.44px;font-size:10px;line-height:10px;color:#e8e8e8;letter-spacing:0.138px;">Name:</div>
<div class="t" style="left:1021.00px;top:154.28px;font-size:10px;line-height:10px;color:#e8e8e8;letter-spacing:0.230px;">Width:</div>
<div class="t" style="left:1016.50px;top:179.13px;font-size:10px;line-height:10px;color:#e8e8e8;letter-spacing:0.383px;">Height:</div>
<div class="t" style="left:990.50px;top:203.99px;font-size:10px;line-height:10px;color:#e8e8e8;letter-spacing:0.229px;">Pixel Aspect:</div>
<div class="t" style="left:1006.50px;top:228.83px;font-size:10px;line-height:10px;color:#e8e8e8;letter-spacing:0.425px;">Duration:</div>
<div class="t" style="left:1000.00px;top:253.69px;font-size:10px;line-height:10px;color:#e8e8e8;letter-spacing:0.178px;">Framerate:</div>
<div style="left:1061px;top:127px;width:182px;height:16px;background:#626262;border:1px solid #8a8a8a;border-top-color:#484848;border-left-color:#505050;box-sizing:border-box;"></div>
<div class="t" style="left:1065.30px;top:130.94px;font-size:10px;line-height:10px;color:#ededed;letter-spacing:0.160px;">GenArts_MainComp</div>
<div style="left:1061px;top:152px;width:40px;height:16px;background:#626262;border:1px solid #8a8a8a;border-top-color:#484848;border-left-color:#505050;box-sizing:border-box;"></div>
<div class="t" style="left:1065.30px;top:155.94px;font-size:10px;line-height:10px;color:#ededed;letter-spacing:0.583px;">1280</div>
<div class="t" style="left:1103.50px;top:155.53px;font-size:10px;line-height:10px;color:#e8e8e8;letter-spacing:0.450px;">px</div>
<div style="left:1061px;top:177px;width:40px;height:16px;background:#626262;border:1px solid #8a8a8a;border-top-color:#484848;border-left-color:#505050;box-sizing:border-box;"></div>
<div class="t" style="left:1065.30px;top:180.94px;font-size:10px;line-height:10px;color:#ededed;letter-spacing:0.650px;">720</div>
<div class="t" style="left:1103.50px;top:180.38px;font-size:10px;line-height:10px;color:#e8e8e8;letter-spacing:0.450px;">px</div>
<div style="left:1061px;top:202px;width:40px;height:16px;background:#626262;border:1px solid #8a8a8a;border-top-color:#484848;border-left-color:#505050;box-sizing:border-box;"></div>
<div class="t" style="left:1065.30px;top:205.94px;font-size:10px;line-height:10px;color:#ededed;">1</div>
<div style="left:1061px;top:227px;width:40px;height:16px;background:#626262;border:1px solid #8a8a8a;border-top-color:#484848;border-left-color:#505050;box-sizing:border-box;"></div>
<div class="t" style="left:1065.30px;top:230.94px;font-size:10px;line-height:10px;color:#ededed;letter-spacing:-0.100px;">10</div>
<div class="t" style="left:1103.50px;top:230.09px;font-size:10px;line-height:10px;color:#e8e8e8;">s</div>
<div style="left:1061px;top:252px;width:40px;height:16px;background:#626262;border:1px solid #8a8a8a;border-top-color:#484848;border-left-color:#505050;box-sizing:border-box;"></div>
<div class="t" style="left:1065.30px;top:255.93px;font-size:10px;line-height:10px;color:#ededed;letter-spacing:0.900px;">25</div>
<div class="t" style="left:1103.50px;top:254.93px;font-size:10px;line-height:10px;color:#e8e8e8;letter-spacing:0.575px;">fps</div>
<div style="left:971px;top:306px;width:293px;height:129px;border:1px solid #bdbdbd;box-sizing:border-box;box-shadow:inset 1px 1px 0 #454545, 1px 1px 0 #454545;"></div>
<div style="left:981px;top:303px;width:47.5px;height:6px;background:#595959;"></div>
<div class="t" style="left:986.00px;top:302.08px;font-size:10.3px;line-height:10.3px;color:#e8e8e8;letter-spacing:0.038px;">Settings</div>
<div style="left:991px;top:325px;width:13px;height:13px;background:linear-gradient(#fbfbfb,#dedede);border:1px solid #5a5a5a;box-sizing:border-box;box-shadow:0 0 0 1px #a8a8a8;"></div>
<svg style="left:993px;top:325px;" width="11" height="11" viewBox="0 0 11 11"><path d="M1.5 5.5 L4.3 8.5 L9.5 0.8" fill="none" stroke="#151515" stroke-width="1.8"/></svg>
<div class="t" style="left:1011.90px;top:325.94px;font-size:10px;line-height:10px;color:#e8e8e8;letter-spacing:0.482px;">Add timestamp at the end of comp-name</div>
<div style="left:991px;top:349px;width:13px;height:13px;background:linear-gradient(#fbfbfb,#dedede);border:1px solid #5a5a5a;box-sizing:border-box;box-shadow:0 0 0 1px #a8a8a8;"></div>
<svg style="left:993px;top:349px;" width="11" height="11" viewBox="0 0 11 11"><path d="M1.5 5.5 L4.3 8.5 L9.5 0.8" fill="none" stroke="#151515" stroke-width="1.8"/></svg>
<div class="t" style="left:1011.90px;top:349.94px;font-size:10px;line-height:10px;color:#e8e8e8;letter-spacing:0.420px;">Start items at random points in time</div>
<div style="left:1004px;top:373px;width:13px;height:13px;background:linear-gradient(#fbfbfb,#dedede);border:1px solid #5a5a5a;box-sizing:border-box;box-shadow:0 0 0 1px #a8a8a8;"></div>
<div class="t" style="left:1026.00px;top:374.14px;font-size:10px;line-height:10px;color:#e8e8e8;letter-spacing:0.436px;">..and loop each item until its original duration</div>
<div style="left:991px;top:397px;width:13px;height:13px;background:linear-gradient(#fbfbfb,#dedede);border:1px solid #5a5a5a;box-sizing:border-box;box-shadow:0 0 0 1px #a8a8a8;"></div>
<svg style="left:993px;top:397px;" width="11" height="11" viewBox="0 0 11 11"><path d="M1.5 5.5 L4.3 8.5 L9.5 0.8" fill="none" stroke="#151515" stroke-width="1.8"/></svg>
<div class="t" style="left:1011.90px;top:398.14px;font-size:10px;line-height:10px;color:#e8e8e8;letter-spacing:0.361px;">Open composition after successful creation</div>
<div style="left:1131px;top:450px;width:133px;height:18px;background:linear-gradient(#ffffff,#e2e2e2);border:1px solid #2a2a2a;box-sizing:border-box;border-radius:2px;box-shadow:0 1px 0 #8a8a8a;"></div>
<div class="t" style="left:1146.00px;top:454.14px;font-size:10px;line-height:10px;color:#111111;letter-spacing:0.258px;">Generate Compositon</div>
<svg style="left:1068px;top:454px;" width="12" height="17" viewBox="0 0 12 17"><path d="M1 1 L1 13 L4 10 L6.5 15.5 L8.5 14.5 L6 9 L10 9 Z" fill="#111" stroke="#eee" stroke-width="0.9"/></svg>
<div style="left:0px;top:482px;width:1280px;height:295px;background:#595959;"></div>
<div style="left:0px;top:482px;width:1px;height:295px;background:#6a6a6a;"></div>
<div style="left:0px;top:482px;width:1280px;height:16px;background:#4a4a4a;"></div>
<div style="left:1px;top:482px;width:171px;height:16px;background:#595959;"></div>
<div style="left:172px;top:482px;width:1108px;height:16px;background:#4d4d4d;border-left:1px solid #242424;border-bottom:1px solid #2c2c2c;box-sizing:border-box;"></div>
<div style="left:3px;top:486px;width:4px;height:1px;background:#6a6a6a;"></div>
<div style="left:3px;top:488px;width:4px;height:1px;background:#6a6a6a;"></div>
<div style="left:3px;top:490px;width:4px;height:1px;background:#6a6a6a;"></div>
<div style="left:3px;top:492px;width:4px;height:1px;background:#6a6a6a;"></div>
<div style="left:3px;top:494px;width:4px;height:1px;background:#6a6a6a;"></div>
<div style="left:11px;top:485px;width:10px;height:10px;background:#b3a47e;border-top:1px solid #2a2418;box-sizing:border-box;"></div>
<div class="t" style="left:24.20px;top:485.94px;font-size:10px;line-height:10px;color:#e6e6e6;letter-spacing:0.239px;">GenArts_MainComp_003755</div>
<svg style="left:163px;top:486px;" width="7" height="7" viewBox="0 0 7 7"><path d="M1 1 L6 6 M6 1 L1 6" stroke="#8a8a8a" stroke-width="1.1"/></svg>
<svg style="left:1249px;top:486px;" width="14" height="10" viewBox="0 0 14 10"><path d="M0 3 L4 3 L2 5.5 Z" fill="#e0e0e0"/><rect x="5" y="0" width="8" height="1" fill="#cfcfcf"/><rect x="5" y="3" width="8" height="1" fill="#d8d8d8"/><rect x="5" y="5" width="8" height="1" fill="#d8d8d8"/><rect x="5" y="8" width="8" height="1" fill="#e0e0e0"/></svg>
<div style="left:1268px;top:482px;width:1px;height:16px;background:#2c2c2c;"></div>
<div style="left:1272px;top:486px;width:4px;height:1px;background:#6a6a6a;"></div>
<div style="left:1272px;top:488px;width:4px;height:1px;background:#6a6a6a;"></div>
<div style="left:1272px;top:490px;width:4px;height:1px;background:#6a6a6a;"></div>
<div style="left:1272px;top:492px;width:4px;height:1px;background:#6a6a6a;"></div>
<div style="left:1272px;top:494px;width:4px;height:1px;background:#6a6a6a;"></div>
<div class="t" style="left:14.00px;top:502.79px;font-size:13.6px;line-height:13.6px;color:#e9ae1c;font-weight:bold;letter-spacing:0.422px;">0:00:02:17</div>
<div style="left:13px;top:516px;width:73px;height:1px;background:repeating-linear-gradient(90deg,#8a7440 0 1px,transparent 1px 2px);"></div>
<div class="t" style="left:10.90px;top:517.97px;font-size:10.2px;line-height:10.2px;color:#e0aa24;letter-spacing:-0.160px;">00067 (25.00 fps)</div>
<div style="left:99px;top:506px;width:261px;height:17px;background:#a8a8a8;border:1px solid #1c1c1c;box-sizing:border-box;border-radius:2px;box-shadow:inset 0 1px 1px #666;"></div>
<svg style="left:101px;top:508px;" width="12" height="13" viewBox="0 0 12 13"><circle cx="7" cy="5" r="3.5" fill="none" stroke="#111" stroke-width="1.3"/><path d="M4.5 7.5 L1 11.5" stroke="#111" stroke-width="1.7"/></svg>
<svg style="left:116px;top:511px;" width="7" height="5" viewBox="0 0 7 5"><path d="M0 0 L7 0 L3.5 5 Z" fill="#eee"/></svg>
<svg style="left:369px;top:508px;" width="24" height="15" viewBox="0 0 24 15"><g fill="#e4e4e4" stroke="#222" stroke-width="0.6"><rect x="1" y="1.5" width="4" height="3"/><rect x="1" y="5.8" width="4" height="3"/><rect x="1" y="10" width="4" height="3"/><rect x="8.5" y="5.8" width="5" height="3"/><rect x="16" y="1.5" width="4" height="3"/><rect x="16" y="5.8" width="4" height="3"/><rect x="16" y="10" width="4" height="3"/></g><path d="M5 3 Q7.5 3 8.5 7.3 Q7.5 11.5 5 11.5 M16 3 Q14 3 13.5 7.3 Q14 11.5 16 11.5 M5 7.3 L8.5 7.3 M13.5 7.3 L16 7.3" fill="none" stroke="#d8d8d8" stroke-width="0.9"/><path d="M21 11 L23.5 11 L22.2 13.5 Z" fill="#ddd"/></svg>
<div style="left:401px;top:504px;width:21px;height:22px;background:#2a2a2a;border:1px solid #161616;box-sizing:border-box;"></div>
<svg style="left:403px;top:506px;" width="17" height="18" viewBox="0 0 17 18"><rect x="4.5" y="5.5" width="11" height="10" fill="#8a8a8a" stroke="#b8b8b8" stroke-width="1"/><rect x="1.5" y="1.5" width="10" height="10" rx="1" fill="#333" stroke="#e8e8e8" stroke-width="1.2"/><rect x="3.5" y="3.5" width="6" height="6" fill="none" stroke="#cfcfcf" stroke-width="0.9"/><circle cx="6.5" cy="6.5" r="1.8" fill="none" stroke="#bbb" stroke-width="0.8"/></svg>
<svg style="left:425px;top:506px;" width="19" height="17" viewBox="0 0 19 17"><path d="M4 1 L4 8 M0.5 4.5 L7.5 4.5 M1.5 2 L6.5 7 M6.5 2 L1.5 7" stroke="#eee" stroke-width="1"/><circle cx="4" cy="4.5" r="1.3" fill="#fff"/><path d="M11.5 6 L17 8.5 L17 14 L11.5 16.5 L6 14 L6 8.5 Z" fill="#cfcfcf" stroke="#555" stroke-width="0.6"/><path d="M6 8.5 L11.5 11 L17 8.5 M11.5 11 L11.5 16.5" stroke="#8a8a8a" fill="none" stroke-width="0.8"/></svg>
<svg style="left:456px;top:507px;" width="18" height="16" viewBox="0 0 18 16"><path d="M1.5 10 Q1.5 1.5 9 1.5 Q16.5 1.5 16.5 10 Z" fill="#3a3a3a"/><circle cx="9" cy="7" r="3.6" fill="#f0f0f0"/><path d="M8 9 L10 9 L9.5 12 L8.5 12 Z" fill="#f0f0f0"/><rect x="1" y="9.5" width="16" height="2" fill="#7a7a7a"/><rect x="1" y="11.5" width="16" height="4" fill="#9a9a9a"/></svg>
<svg style="left:479px;top:507px;" width="18" height="16" viewBox="0 0 18 16"><g fill="none" stroke="#d8d8d8" stroke-width="1"><rect x="1" y="4.5" width="5" height="10"/><rect x="6.5" y="2.5" width="5" height="10"/><rect x="12" y="0.5" width="5" height="10"/></g><path d="M2.2 5 L2.2 14 M4.8 5 L4.8 14 M7.7 3 L7.7 12 M10.3 3 L10.3 12 M13.2 1 L13.2 10 M15.8 1 L15.8 10" stroke="#aaa" stroke-width="0.8" stroke-dasharray="1 1"/></svg>
<svg style="left:502px;top:506px;" width="19" height="18" viewBox="0 0 19 18"><g transform="rotate(-42 9.5 9)"><rect x="1" y="6" width="17" height="8" rx="4" fill="#7e7e7e"/><rect x="1" y="4.5" width="17" height="8" rx="4" fill="#9a9a9a"/><rect x="1" y="3" width="17" height="8" rx="4" fill="#c0c0c0" stroke="#2a2a2a" stroke-width="0.7"/></g></svg>
<svg style="left:531px;top:506px;" width="20" height="18" viewBox="0 0 20 18"><ellipse cx="11.5" cy="7" rx="7.8" ry="6" fill="#d8d8d8" stroke="#2a2a2a" stroke-width="0.8"/><circle cx="11.5" cy="5.8" r="2.2" fill="#fafafa"/><rect x="10.7" y="7.5" width="1.6" height="2.4" fill="#444"/><circle cx="5" cy="13.8" r="1.6" fill="#cfcfcf"/><circle cx="2" cy="16.2" r="1.1" fill="#dedede"/></svg>
<svg style="left:556px;top:506px;" width="16" height="17" viewBox="0 0 16 17"><rect x="6" y="0.5" width="4" height="1.5" fill="#ccc"/><rect x="7.3" y="2" width="1.4" height="2" fill="#ccc"/><circle cx="8.5" cy="10.5" r="5.4" fill="#8a8a8a" stroke="#d8d8d8" stroke-width="1.3"/><path d="M0.5 5.5 L3.5 3 L3.5 7.5 Z" fill="#ccc"/></svg>
<svg style="left:579px;top:507px;" width="19" height="16" viewBox="0 0 19 16"><rect x="1.5" y="1.5" width="15" height="11" fill="none" stroke="#cfcfcf" stroke-width="1" stroke-dasharray="1.6 0.9"/><path d="M2.5 4.5 Q5 2.5 8 7 Q11 11.5 15.5 4" fill="none" stroke="#e0e0e0" stroke-width="1.3"/><path d="M2.5 9 L15.5 9" stroke="#aaa" stroke-width="0.8" stroke-dasharray="1 1"/><path d="M3 12.5 L3 15 M7 12.5 L7 15 M11 12.5 L11 15 M15 12.5 L15 15" stroke="#ccc" stroke-width="0.9"/></svg>
<div style="left:1px;top:530px;width:609px;height:2px;background:#2c2c2c;"></div>
<div style="left:1px;top:532px;width:609px;height:15px;background:linear-gradient(#5d5d5d,#535353);"></div>
<div style="left:1px;top:546px;width:609px;height:2px;background:#2a2a2a;"></div>
<svg style="left:5px;top:535px;" width="13" height="9" viewBox="0 0 13 9"><path d="M0.5 4.5 Q6.5 -1.5 12.5 4.5 Q6.5 10.5 0.5 4.5 Z" fill="#d8d8d8" stroke="#555" stroke-width="0.6"/><circle cx="6.5" cy="4.5" r="2.2" fill="#555"/><circle cx="6.5" cy="4.5" r="0.9" fill="#ddd"/></svg>
<svg style="left:19px;top:533px;" width="12" height="12" viewBox="0 0 12 12"><path d="M0 4 L3 4 L7 0.5 L7 11.5 L3 8 L0 8 Z" fill="#d8d8d8"/><path d="M8.5 3.5 Q10.5 6 8.5 8.5 M9.5 1.5 Q13 6 9.5 10.5" stroke="#bbb" fill="none" stroke-width="0.9"/></svg>
<div style="left:35px;top:535px;width:8px;height:8px;border-radius:50%;background:#d0d0d0"></div>
<svg style="left:48px;top:533px;" width="8" height="11" viewBox="0 0 8 11"><path d="M1.8 5 L1.8 3 Q1.8 0.7 4 0.7 Q6.2 0.7 6.2 3 L6.2 5" fill="none" stroke="#ddd" stroke-width="1.2"/><rect x="0" y="5" width="8" height="6" fill="#ddd"/><rect x="3.3" y="7" width="1.4" height="2.5" fill="#555"/></svg>
<div style="left:61px;top:535px;width:1px;height:10px;background:#3a3a3a;"></div>
<div style="left:90px;top:535px;width:1px;height:10px;background:#3a3a3a;"></div>
<div style="left:119px;top:535px;width:1px;height:10px;background:#3a3a3a;"></div>
<div style="left:289px;top:535px;width:1px;height:10px;background:#3a3a3a;"></div>
<div style="left:491px;top:535px;width:1px;height:10px;background:#3a3a3a;"></div>
<div style="left:595px;top:535px;width:1px;height:10px;background:#3a3a3a;"></div>
<svg style="left:74px;top:533px;" width="14" height="13" viewBox="0 0 14 13"><path d="M1 9 L8 2 L13 1 L12 6 L5 13 Z" fill="#dcdcdc"/><circle cx="10" cy="4" r="1.1" fill="#555"/><path d="M10 4 L14 0" stroke="#ddd"/></svg>
<div class="t" style="left:94.50px;top:535.17px;font-size:9.6px;line-height:9.6px;color:#d6d6d6;letter-spacing:-0.294px;">Nr.</div>
<div class="t" style="left:124.20px;top:535.17px;font-size:9.6px;line-height:9.6px;color:#d6d6d6;letter-spacing:-0.632px;">Quellenname</div>
<svg style="left:293px;top:536px;" width="12" height="7" viewBox="0 0 12 7"><path d="M0 4 L3 4 M9 4 L12 4" stroke="#ddd" stroke-width="1"/><path d="M3 4 Q6 0 9 4 Z" fill="#ddd"/><path d="M4.5 4 L7.5 4 L6 6.5 Z" fill="#ddd"/></svg>
<svg style="left:307px;top:534px;" width="11" height="11" viewBox="0 0 11 11"><circle cx="5.5" cy="5.5" r="2.2" fill="none" stroke="#ddd" stroke-width="1.3"/><path d="M5.5 0 L5.5 2 M5.5 9 L5.5 11 M0 5.5 L2 5.5 M9 5.5 L11 5.5 M1.5 1.5 L3 3 M8 8 L9.5 9.5 M9.5 1.5 L8 3 M3 8 L1.5 9.5" stroke="#ddd" stroke-width="1.1"/></svg>
<svg style="left:320px;top:534px;" width="12" height="12" viewBox="0 0 12 12"><path d="M1 1 L11 11" stroke="#ddd" stroke-width="1.5" stroke-dasharray="1.5 1"/></svg>
<div class="t" style="left:336.00px;top:534.19px;font-size:11px;line-height:11px;color:#bdbdbd;font-family:'Liberation Serif',serif;font-style:italic;">fx</div>
<svg style="left:348px;top:533px;" width="12" height="13" viewBox="0 0 12 13"><rect x="0.5" y="0.5" width="11" height="12" fill="none" stroke="#ccc"/><path d="M2.5 1 L2.5 12 M9.5 1 L9.5 12" stroke="#ccc" stroke-dasharray="1 1"/><rect x="4" y="4" width="4" height="5" fill="#ddd"/></svg>
<svg style="left:360px;top:533px;" width="12" height="13" viewBox="0 0 12 13"><g transform="rotate(-40 6 6.5)"><rect x="0" y="3" width="12" height="7" rx="3.5" fill="#888"/><rect x="0" y="1" width="12" height="7" rx="3.5" fill="#bbb"/></g></svg>
<svg style="left:373px;top:533px;" width="13" height="13" viewBox="0 0 13 13"><circle cx="6.5" cy="6.5" r="6" fill="#d8d8d8" stroke="#333" stroke-width="0.6"/><path d="M2.2 10.8 A6 6 0 0 1 10.8 2.2 Z" fill="#222"/></svg>
<svg style="left:386px;top:533px;" width="12" height="13" viewBox="0 0 12 13"><path d="M6 0.5 L11.5 3.5 L11.5 9.5 L6 12.5 L0.5 9.5 L0.5 3.5 Z" fill="#cfcfcf" stroke="#444" stroke-width="0.7"/><path d="M0.5 3.5 L6 6.5 L11.5 3.5 M6 6.5 L6 12.5" stroke="#888" fill="none" stroke-width="0.8"/></svg>
<div class="t" style="left:496.00px;top:534.97px;font-size:9.6px;line-height:9.6px;color:#d6d6d6;letter-spacing:-0.482px;">Übergeordnet</div>
<div style="left:611px;top:548px;width:652px;height:211px;background:#5e5e5e;"></div>
<div style="left:1257px;top:548px;width:6px;height:211px;background:#545454;"></div>
<div style="left:1px;top:548px;width:609px;height:15px;background:#535353;"></div>
<div style="left:5px;top:561px;width:13px;height:1px;background:#8a8a8a;"></div>
<svg style="left:5px;top:551px;" width="13" height="9" viewBox="0 0 13 9"><path d="M0.5 4.5 Q6.5 -1.5 12.5 4.5 Q6.5 10.5 0.5 4.5 Z" fill="#d8d8d8" stroke="#555" stroke-width="0.6"/><circle cx="6.5" cy="4.5" r="2.2" fill="#555"/><circle cx="6.5" cy="4.5" r="0.9" fill="#ddd"/></svg>
<div style="left:32px;top:550px;width:12px;height:12px;background:#545454;border:1px solid #474747;border-bottom:1px solid #8c8c8c;box-sizing:border-box;"></div>
<div style="left:46px;top:550px;width:11px;height:12px;background:#545454;border:1px solid #474747;border-bottom:1px solid #8c8c8c;box-sizing:border-box;"></div>
<svg style="left:67px;top:552px;" width="6" height="8" viewBox="0 0 6 8"><path d="M0 0 L6 4 L0 8 Z" fill="#8c8c8c"/></svg>
<div style="left:78px;top:551px;width:9px;height:9px;background:#e38ae0;"></div>
<div class="t" style="left:96.60px;top:550.33px;font-size:10.6px;line-height:10.6px;color:#e8e8e8;font-weight:bold;">1</div>
<svg style="left:121px;top:548px;" width="16" height="13" viewBox="0 0 16 13"><rect x="0.5" y="1" width="15" height="11" fill="#b8b8b8"/><rect x="4" y="0" width="8" height="1.5" fill="#1a1a1a"/><rect x="4" y="11.5" width="8" height="1.5" fill="#1a1a1a"/><path d="M2 2 L2 11 M14 2 L14 11" stroke="#8a8a8a" stroke-width="1.2" stroke-dasharray="1 1"/><rect x="3.8" y="2.5" width="8.4" height="8" fill="#0a0a0a"/><circle cx="6.3" cy="5.3" r="1.9" fill="#3a9ee8"/><circle cx="9.8" cy="5.6" r="1.7" fill="#e0603a"/><path d="M4.3 10 L8 6.8 L11.5 10 Z" fill="#50a830"/></svg>
<div class="t" style="left:139.50px;top:550.33px;font-size:10.6px;line-height:10.6px;color:#ececec;font-weight:bold;letter-spacing:-0.100px;">circle2</div>
<div style="left:293px;top:550px;width:12px;height:12px;background:#545454;border:1px solid #474747;border-bottom:1px solid #8c8c8c;box-sizing:border-box;"></div>
<svg style="left:293px;top:552px;" width="12" height="7" viewBox="0 0 12 7"><path d="M0 4 L3 4 M9 4 L12 4" stroke="#ddd" stroke-width="1"/><path d="M3 4 Q6 0 9 4 Z" fill="#ddd"/><path d="M4.5 4 L7.5 4 L6 6.5 Z" fill="#ddd"/></svg>
<div style="left:307px;top:550px;width:11px;height:12px;background:#545454;border:1px solid #474747;border-bottom:1px solid #8c8c8c;box-sizing:border-box;"></div>
<div style="left:320px;top:550px;width:12px;height:12px;background:#545454;border:1px solid #474747;border-bottom:1px solid #8c8c8c;box-sizing:border-box;"></div>
<svg style="left:320px;top:549px;" width="12" height="13" viewBox="0 0 12 13"><path d="M1.5 12 L11 1.5" stroke="#eeeeee" stroke-width="1.7"/></svg>
<div style="left:360px;top:550px;width:11px;height:12px;background:#545454;border:1px solid #474747;border-bottom:1px solid #8c8c8c;box-sizing:border-box;"></div>
<div style="left:374px;top:550px;width:11px;height:12px;background:#545454;border:1px solid #474747;border-bottom:1px solid #8c8c8c;box-sizing:border-box;"></div>
<div style="left:387px;top:550px;width:11px;height:12px;background:#545454;border:1px solid #474747;border-bottom:1px solid #8c8c8c;box-sizing:border-box;"></div>
<svg style="left:496px;top:550px;" width="11" height="11" viewBox="0 0 11 11"><path d="M5.5 5.5 m-1.5 0 a1.5 1.5 0 1 1 3 0 a3 3 0 1 1 -6 0 a4.5 4.5 0 1 1 9 0" fill="none" stroke="#d0d0d0" stroke-width="1.2"/></svg>
<div style="left:512px;top:549px;width:79px;height:13px;background:linear-gradient(#585858,#484848);border:1px solid #2a2a2a;box-sizing:border-box;border-radius:2px;box-shadow:inset 0 1px 0 #666;"></div>
<div style="left:574px;top:551px;width:1px;height:9px;background:#3c3c3c;"></div>
<svg style="left:578px;top:553px;" width="8" height="6" viewBox="0 0 8 6"><path d="M0 0 L8 0 L4 5.5 Z" fill="#e6e6e6"/></svg>
<div class="t" style="left:518.00px;top:550.33px;font-size:10.6px;line-height:10.6px;color:#ececec;letter-spacing:-0.906px;">Ohne</div>
<div style="left:1196px;top:549px;width:67px;height:14px;background:#c45cb3;border-top:1px solid #d888cc;box-sizing:border-box;"></div>
<div style="left:1px;top:563px;width:609px;height:15px;background:#535353;"></div>
<div style="left:1px;top:563px;width:609px;height:1px;background:#626262;"></div>
<div style="left:611px;top:563px;width:652px;height:1px;background:#646464;"></div>
<div style="left:5px;top:576px;width:13px;height:1px;background:#8a8a8a;"></div>
<svg style="left:5px;top:566px;" width="13" height="9" viewBox="0 0 13 9"><path d="M0.5 4.5 Q6.5 -1.5 12.5 4.5 Q6.5 10.5 0.5 4.5 Z" fill="#d8d8d8" stroke="#555" stroke-width="0.6"/><circle cx="6.5" cy="4.5" r="2.2" fill="#555"/><circle cx="6.5" cy="4.5" r="0.9" fill="#ddd"/></svg>
<div style="left:32px;top:565px;width:12px;height:12px;background:#545454;border:1px solid #474747;border-bottom:1px solid #8c8c8c;box-sizing:border-box;"></div>
<div style="left:46px;top:565px;width:11px;height:12px;background:#545454;border:1px solid #474747;border-bottom:1px solid #8c8c8c;box-sizing:border-box;"></div>
<svg style="left:67px;top:567px;" width="6" height="8" viewBox="0 0 6 8"><path d="M0 0 L6 4 L0 8 Z" fill="#8c8c8c"/></svg>
<div style="left:78px;top:566px;width:9px;height:9px;background:#e38ae0;"></div>
<div class="t" style="left:96.60px;top:565.33px;font-size:10.6px;line-height:10.6px;color:#e8e8e8;font-weight:bold;">2</div>
<svg style="left:121px;top:563px;" width="16" height="13" viewBox="0 0 16 13"><rect x="0.5" y="1" width="15" height="11" fill="#b8b8b8"/><rect x="4" y="0" width="8" height="1.5" fill="#1a1a1a"/><rect x="4" y="11.5" width="8" height="1.5" fill="#1a1a1a"/><path d="M2 2 L2 11 M14 2 L14 11" stroke="#8a8a8a" stroke-width="1.2" stroke-dasharray="1 1"/><rect x="3.8" y="2.5" width="8.4" height="8" fill="#0a0a0a"/><circle cx="6.3" cy="5.3" r="1.9" fill="#3a9ee8"/><circle cx="9.8" cy="5.6" r="1.7" fill="#e0603a"/><path d="M4.3 10 L8 6.8 L11.5 10 Z" fill="#50a830"/></svg>
<div class="t" style="left:139.50px;top:565.33px;font-size:10.6px;line-height:10.6px;color:#ececec;font-weight:bold;letter-spacing:-0.110px;">circleAnim2</div>
<div style="left:293px;top:565px;width:12px;height:12px;background:#545454;border:1px solid #474747;border-bottom:1px solid #8c8c8c;box-sizing:border-box;"></div>
<svg style="left:293px;top:567px;" width="12" height="7" viewBox="0 0 12 7"><path d="M0 4 L3 4 M9 4 L12 4" stroke="#ddd" stroke-width="1"/><path d="M3 4 Q6 0 9 4 Z" fill="#ddd"/><path d="M4.5 4 L7.5 4 L6 6.5 Z" fill="#ddd"/></svg>
<div style="left:307px;top:565px;width:11px;height:12px;background:#545454;border:1px solid #474747;border-bottom:1px solid #8c8c8c;box-sizing:border-box;"></div>
<div style="left:320px;top:565px;width:12px;height:12px;background:#545454;border:1px solid #474747;border-bottom:1px solid #8c8c8c;box-sizing:border-box;"></div>
<svg style="left:320px;top:564px;" width="12" height="13" viewBox="0 0 12 13"><path d="M1.5 12 L11 1.5" stroke="#eeeeee" stroke-width="1.7"/></svg>
<div style="left:360px;top:565px;width:11px;height:12px;background:#545454;border:1px solid #474747;border-bottom:1px solid #8c8c8c;box-sizing:border-box;"></div>
<div style="left:374px;top:565px;width:11px;height:12px;background:#545454;border:1px solid #474747;border-bottom:1px solid #8c8c8c;box-sizing:border-box;"></div>
<div style="left:387px;top:565px;width:11px;height:12px;background:#545454;border:1px solid #474747;border-bottom:1px solid #8c8c8c;box-sizing:border-box;"></div>
<svg style="left:496px;top:565px;" width="11" height="11" viewBox="0 0 11 11"><path d="M5.5 5.5 m-1.5 0 a1.5 1.5 0 1 1 3 0 a3 3 0 1 1 -6 0 a4.5 4.5 0 1 1 9 0" fill="none" stroke="#d0d0d0" stroke-width="1.2"/></svg>
<div style="left:512px;top:564px;width:79px;height:13px;background:linear-gradient(#585858,#484848);border:1px solid #2a2a2a;box-sizing:border-box;border-radius:2px;box-shadow:inset 0 1px 0 #666;"></div>
<div style="left:574px;top:566px;width:1px;height:9px;background:#3c3c3c;"></div>
<svg style="left:578px;top:568px;" width="8" height="6" viewBox="0 0 8 6"><path d="M0 0 L8 0 L4 5.5 Z" fill="#e6e6e6"/></svg>
<div class="t" style="left:518.00px;top:565.33px;font-size:10.6px;line-height:10.6px;color:#ececec;letter-spacing:-0.906px;">Ohne</div>
<div style="left:1002px;top:564px;width:194px;height:14px;background:#c45cb3;border-top:1px solid #d888cc;box-sizing:border-box;"></div>
<div style="left:1px;top:578px;width:609px;height:15px;background:#535353;"></div>
<div style="left:1px;top:578px;width:609px;height:1px;background:#626262;"></div>
<div style="left:611px;top:578px;width:652px;height:1px;background:#646464;"></div>
<div style="left:5px;top:591px;width:13px;height:1px;background:#8a8a8a;"></div>
<svg style="left:5px;top:581px;" width="13" height="9" viewBox="0 0 13 9"><path d="M0.5 4.5 Q6.5 -1.5 12.5 4.5 Q6.5 10.5 0.5 4.5 Z" fill="#d8d8d8" stroke="#555" stroke-width="0.6"/><circle cx="6.5" cy="4.5" r="2.2" fill="#555"/><circle cx="6.5" cy="4.5" r="0.9" fill="#ddd"/></svg>
<div style="left:32px;top:580px;width:12px;height:12px;background:#545454;border:1px solid #474747;border-bottom:1px solid #8c8c8c;box-sizing:border-box;"></div>
<div style="left:46px;top:580px;width:11px;height:12px;background:#545454;border:1px solid #474747;border-bottom:1px solid #8c8c8c;box-sizing:border-box;"></div>
<svg style="left:67px;top:582px;" width="6" height="8" viewBox="0 0 6 8"><path d="M0 0 L6 4 L0 8 Z" fill="#8c8c8c"/></svg>
<div style="left:78px;top:581px;width:9px;height:9px;background:#e38ae0;"></div>
<div class="t" style="left:96.60px;top:580.33px;font-size:10.6px;line-height:10.6px;color:#e8e8e8;font-weight:bold;">3</div>
<svg style="left:121px;top:578px;" width="16" height="13" viewBox="0 0 16 13"><rect x="0.5" y="1" width="15" height="11" fill="#b8b8b8"/><rect x="4" y="0" width="8" height="1.5" fill="#1a1a1a"/><rect x="4" y="11.5" width="8" height="1.5" fill="#1a1a1a"/><path d="M2 2 L2 11 M14 2 L14 11" stroke="#8a8a8a" stroke-width="1.2" stroke-dasharray="1 1"/><rect x="3.8" y="2.5" width="8.4" height="8" fill="#0a0a0a"/><circle cx="6.3" cy="5.3" r="1.9" fill="#3a9ee8"/><circle cx="9.8" cy="5.6" r="1.7" fill="#e0603a"/><path d="M4.3 10 L8 6.8 L11.5 10 Z" fill="#50a830"/></svg>
<div class="t" style="left:139.50px;top:580.33px;font-size:10.6px;line-height:10.6px;color:#ececec;font-weight:bold;letter-spacing:-0.100px;">circle1</div>
<div style="left:293px;top:580px;width:12px;height:12px;background:#545454;border:1px solid #474747;border-bottom:1px solid #8c8c8c;box-sizing:border-box;"></div>
<svg style="left:293px;top:582px;" width="12" height="7" viewBox="0 0 12 7"><path d="M0 4 L3 4 M9 4 L12 4" stroke="#ddd" stroke-width="1"/><path d="M3 4 Q6 0 9 4 Z" fill="#ddd"/><path d="M4.5 4 L7.5 4 L6 6.5 Z" fill="#ddd"/></svg>
<div style="left:307px;top:580px;width:11px;height:12px;background:#545454;border:1px solid #474747;border-bottom:1px solid #8c8c8c;box-sizing:border-box;"></div>
<div style="left:320px;top:580px;width:12px;height:12px;background:#545454;border:1px solid #474747;border-bottom:1px solid #8c8c8c;box-sizing:border-box;"></div>
<svg style="left:320px;top:579px;" width="12" height="13" viewBox="0 0 12 13"><path d="M1.5 12 L11 1.5" stroke="#eeeeee" stroke-width="1.7"/></svg>
<div style="left:360px;top:580px;width:11px;height:12px;background:#545454;border:1px solid #474747;border-bottom:1px solid #8c8c8c;box-sizing:border-box;"></div>
<div style="left:374px;top:580px;width:11px;height:12px;background:#545454;border:1px solid #474747;border-bottom:1px solid #8c8c8c;box-sizing:border-box;"></div>
<div style="left:387px;top:580px;width:11px;height:12px;background:#545454;border:1px solid #474747;border-bottom:1px solid #8c8c8c;box-sizing:border-box;"></div>
<svg style="left:496px;top:580px;" width="11" height="11" viewBox="0 0 11 11"><path d="M5.5 5.5 m-1.5 0 a1.5 1.5 0 1 1 3 0 a3 3 0 1 1 -6 0 a4.5 4.5 0 1 1 9 0" fill="none" stroke="#d0d0d0" stroke-width="1.2"/></svg>
<div style="left:512px;top:579px;width:79px;height:13px;background:linear-gradient(#585858,#484848);border:1px solid #2a2a2a;box-sizing:border-box;border-radius:2px;box-shadow:inset 0 1px 0 #666;"></div>
<div style="left:574px;top:581px;width:1px;height:9px;background:#3c3c3c;"></div>
<svg style="left:578px;top:583px;" width="8" height="6" viewBox="0 0 8 6"><path d="M0 0 L8 0 L4 5.5 Z" fill="#e6e6e6"/></svg>
<div class="t" style="left:518.00px;top:580.33px;font-size:10.6px;line-height:10.6px;color:#ececec;letter-spacing:-0.906px;">Ohne</div>
<div style="left:872px;top:579px;width:130px;height:14px;background:#c45cb3;border-top:1px solid #d888cc;box-sizing:border-box;"></div>
<div style="left:1px;top:593px;width:609px;height:15px;background:#535353;"></div>
<div style="left:1px;top:593px;width:609px;height:1px;background:#626262;"></div>
<div style="left:611px;top:593px;width:652px;height:1px;background:#646464;"></div>
<div style="left:5px;top:606px;width:13px;height:1px;background:#8a8a8a;"></div>
<svg style="left:5px;top:596px;" width="13" height="9" viewBox="0 0 13 9"><path d="M0.5 4.5 Q6.5 -1.5 12.5 4.5 Q6.5 10.5 0.5 4.5 Z" fill="#d8d8d8" stroke="#555" stroke-width="0.6"/><circle cx="6.5" cy="4.5" r="2.2" fill="#555"/><circle cx="6.5" cy="4.5" r="0.9" fill="#ddd"/></svg>
<div style="left:32px;top:595px;width:12px;height:12px;background:#545454;border:1px solid #474747;border-bottom:1px solid #8c8c8c;box-sizing:border-box;"></div>
<div style="left:46px;top:595px;width:11px;height:12px;background:#545454;border:1px solid #474747;border-bottom:1px solid #8c8c8c;box-sizing:border-box;"></div>
<svg style="left:67px;top:597px;" width="6" height="8" viewBox="0 0 6 8"><path d="M0 0 L6 4 L0 8 Z" fill="#8c8c8c"/></svg>
<div style="left:78px;top:596px;width:9px;height:9px;background:#e38ae0;"></div>
<div class="t" style="left:96.60px;top:595.33px;font-size:10.6px;line-height:10.6px;color:#e8e8e8;font-weight:bold;">4</div>
<svg style="left:121px;top:593px;" width="16" height="13" viewBox="0 0 16 13"><rect x="0.5" y="1" width="15" height="11" fill="#b8b8b8"/><rect x="4" y="0" width="8" height="1.5" fill="#1a1a1a"/><rect x="4" y="11.5" width="8" height="1.5" fill="#1a1a1a"/><path d="M2 2 L2 11 M14 2 L14 11" stroke="#8a8a8a" stroke-width="1.2" stroke-dasharray="1 1"/><rect x="3.8" y="2.5" width="8.4" height="8" fill="#0a0a0a"/><circle cx="6.3" cy="5.3" r="1.9" fill="#3a9ee8"/><circle cx="9.8" cy="5.6" r="1.7" fill="#e0603a"/><path d="M4.3 10 L8 6.8 L11.5 10 Z" fill="#50a830"/></svg>
<div class="t" style="left:139.50px;top:595.33px;font-size:10.6px;line-height:10.6px;color:#ececec;font-weight:bold;letter-spacing:-0.100px;">circle2</div>
<div style="left:293px;top:595px;width:12px;height:12px;background:#545454;border:1px solid #474747;border-bottom:1px solid #8c8c8c;box-sizing:border-box;"></div>
<svg style="left:293px;top:597px;" width="12" height="7" viewBox="0 0 12 7"><path d="M0 4 L3 4 M9 4 L12 4" stroke="#ddd" stroke-width="1"/><path d="M3 4 Q6 0 9 4 Z" fill="#ddd"/><path d="M4.5 4 L7.5 4 L6 6.5 Z" fill="#ddd"/></svg>
<div style="left:307px;top:595px;width:11px;height:12px;background:#545454;border:1px solid #474747;border-bottom:1px solid #8c8c8c;box-sizing:border-box;"></div>
<div style="left:320px;top:595px;width:12px;height:12px;background:#545454;border:1px solid #474747;border-bottom:1px solid #8c8c8c;box-sizing:border-box;"></div>
<svg style="left:320px;top:594px;" width="12" height="13" viewBox="0 0 12 13"><path d="M1.5 12 L11 1.5" stroke="#eeeeee" stroke-width="1.7"/></svg>
<div style="left:360px;top:595px;width:11px;height:12px;background:#545454;border:1px solid #474747;border-bottom:1px solid #8c8c8c;box-sizing:border-box;"></div>
<div style="left:374px;top:595px;width:11px;height:12px;background:#545454;border:1px solid #474747;border-bottom:1px solid #8c8c8c;box-sizing:border-box;"></div>
<div style="left:387px;top:595px;width:11px;height:12px;background:#545454;border:1px solid #474747;border-bottom:1px solid #8c8c8c;box-sizing:border-box;"></div>
<svg style="left:496px;top:595px;" width="11" height="11" viewBox="0 0 11 11"><path d="M5.5 5.5 m-1.5 0 a1.5 1.5 0 1 1 3 0 a3 3 0 1 1 -6 0 a4.5 4.5 0 1 1 9 0" fill="none" stroke="#d0d0d0" stroke-width="1.2"/></svg>
<div style="left:512px;top:594px;width:79px;height:13px;background:linear-gradient(#585858,#484848);border:1px solid #2a2a2a;box-sizing:border-box;border-radius:2px;box-shadow:inset 0 1px 0 #666;"></div>
<div style="left:574px;top:596px;width:1px;height:9px;background:#3c3c3c;"></div>
<svg style="left:578px;top:598px;" width="8" height="6" viewBox="0 0 8 6"><path d="M0 0 L8 0 L4 5.5 Z" fill="#e6e6e6"/></svg>
<div class="t" style="left:518.00px;top:595.33px;font-size:10.6px;line-height:10.6px;color:#ececec;letter-spacing:-0.906px;">Ohne</div>
<div style="left:744px;top:594px;width:128px;height:14px;background:#c45cb3;border-top:1px solid #d888cc;box-sizing:border-box;"></div>
<div style="left:1px;top:608px;width:609px;height:15px;background:#535353;"></div>
<div style="left:1px;top:608px;width:609px;height:1px;background:#626262;"></div>
<div style="left:611px;top:608px;width:652px;height:1px;background:#646464;"></div>
<div style="left:5px;top:621px;width:13px;height:1px;background:#8a8a8a;"></div>
<svg style="left:5px;top:611px;" width="13" height="9" viewBox="0 0 13 9"><path d="M0.5 4.5 Q6.5 -1.5 12.5 4.5 Q6.5 10.5 0.5 4.5 Z" fill="#d8d8d8" stroke="#555" stroke-width="0.6"/><circle cx="6.5" cy="4.5" r="2.2" fill="#555"/><circle cx="6.5" cy="4.5" r="0.9" fill="#ddd"/></svg>
<div style="left:32px;top:610px;width:12px;height:12px;background:#545454;border:1px solid #474747;border-bottom:1px solid #8c8c8c;box-sizing:border-box;"></div>
<div style="left:46px;top:610px;width:11px;height:12px;background:#545454;border:1px solid #474747;border-bottom:1px solid #8c8c8c;box-sizing:border-box;"></div>
<svg style="left:67px;top:612px;" width="6" height="8" viewBox="0 0 6 8"><path d="M0 0 L6 4 L0 8 Z" fill="#8c8c8c"/></svg>
<div style="left:78px;top:611px;width:9px;height:9px;background:#e38ae0;"></div>
<div class="t" style="left:96.60px;top:610.33px;font-size:10.6px;line-height:10.6px;color:#e8e8e8;font-weight:bold;">5</div>
<svg style="left:121px;top:608px;" width="16" height="13" viewBox="0 0 16 13"><rect x="0.5" y="1" width="15" height="11" fill="#b8b8b8"/><rect x="4" y="0" width="8" height="1.5" fill="#1a1a1a"/><rect x="4" y="11.5" width="8" height="1.5" fill="#1a1a1a"/><path d="M2 2 L2 11 M14 2 L14 11" stroke="#8a8a8a" stroke-width="1.2" stroke-dasharray="1 1"/><rect x="3.8" y="2.5" width="8.4" height="8" fill="#0a0a0a"/><circle cx="6.3" cy="5.3" r="1.9" fill="#3a9ee8"/><circle cx="9.8" cy="5.6" r="1.7" fill="#e0603a"/><path d="M4.3 10 L8 6.8 L11.5 10 Z" fill="#50a830"/></svg>
<div class="t" style="left:139.50px;top:610.33px;font-size:10.6px;line-height:10.6px;color:#ececec;font-weight:bold;letter-spacing:-0.100px;">circle1</div>
<div style="left:293px;top:610px;width:12px;height:12px;background:#545454;border:1px solid #474747;border-bottom:1px solid #8c8c8c;box-sizing:border-box;"></div>
<svg style="left:293px;top:612px;" width="12" height="7" viewBox="0 0 12 7"><path d="M0 4 L3 4 M9 4 L12 4" stroke="#ddd" stroke-width="1"/><path d="M3 4 Q6 0 9 4 Z" fill="#ddd"/><path d="M4.5 4 L7.5 4 L6 6.5 Z" fill="#ddd"/></svg>
<div style="left:307px;top:610px;width:11px;height:12px;background:#545454;border:1px solid #474747;border-bottom:1px solid #8c8c8c;box-sizing:border-box;"></div>
<div style="left:320px;top:610px;width:12px;height:12px;background:#545454;border:1px solid #474747;border-bottom:1px solid #8c8c8c;box-sizing:border-box;"></div>
<svg style="left:320px;top:609px;" width="12" height="13" viewBox="0 0 12 13"><path d="M1.5 12 L11 1.5" stroke="#eeeeee" stroke-width="1.7"/></svg>
<div style="left:360px;top:610px;width:11px;height:12px;background:#545454;border:1px solid #474747;border-bottom:1px solid #8c8c8c;box-sizing:border-box;"></div>
<div style="left:374px;top:610px;width:11px;height:12px;background:#545454;border:1px solid #474747;border-bottom:1px solid #8c8c8c;box-sizing:border-box;"></div>
<div style="left:387px;top:610px;width:11px;height:12px;background:#545454;border:1px solid #474747;border-bottom:1px solid #8c8c8c;box-sizing:border-box;"></div>
<svg style="left:496px;top:610px;" width="11" height="11" viewBox="0 0 11 11"><path d="M5.5 5.5 m-1.5 0 a1.5 1.5 0 1 1 3 0 a3 3 0 1 1 -6 0 a4.5 4.5 0 1 1 9 0" fill="none" stroke="#d0d0d0" stroke-width="1.2"/></svg>
<div style="left:512px;top:609px;width:79px;height:13px;background:linear-gradient(#585858,#484848);border:1px solid #2a2a2a;box-sizing:border-box;border-radius:2px;box-shadow:inset 0 1px 0 #666;"></div>
<div style="left:574px;top:611px;width:1px;height:9px;background:#3c3c3c;"></div>
<svg style="left:578px;top:613px;" width="8" height="6" viewBox="0 0 8 6"><path d="M0 0 L8 0 L4 5.5 Z" fill="#e6e6e6"/></svg>
<div class="t" style="left:518.00px;top:610.33px;font-size:10.6px;line-height:10.6px;color:#ececec;letter-spacing:-0.906px;">Ohne</div>
<div style="left:616px;top:609px;width:128px;height:14px;background:#c45cb3;border-top:1px solid #d888cc;box-sizing:border-box;"></div>
<div style="left:1px;top:623px;width:609px;height:15px;background:#535353;"></div>
<div style="left:1px;top:623px;width:609px;height:1px;background:#626262;"></div>
<div style="left:611px;top:623px;width:652px;height:1px;background:#646464;"></div>
<div style="left:5px;top:636px;width:13px;height:1px;background:#8a8a8a;"></div>
<svg style="left:5px;top:626px;" width="13" height="9" viewBox="0 0 13 9"><path d="M0.5 4.5 Q6.5 -1.5 12.5 4.5 Q6.5 10.5 0.5 4.5 Z" fill="#d8d8d8" stroke="#555" stroke-width="0.6"/><circle cx="6.5" cy="4.5" r="2.2" fill="#555"/><circle cx="6.5" cy="4.5" r="0.9" fill="#ddd"/></svg>
<div style="left:32px;top:625px;width:12px;height:12px;background:#545454;border:1px solid #474747;border-bottom:1px solid #8c8c8c;box-sizing:border-box;"></div>
<div style="left:46px;top:625px;width:11px;height:12px;background:#545454;border:1px solid #474747;border-bottom:1px solid #8c8c8c;box-sizing:border-box;"></div>
<svg style="left:67px;top:627px;" width="6" height="8" viewBox="0 0 6 8"><path d="M0 0 L6 4 L0 8 Z" fill="#8c8c8c"/></svg>
<div style="left:78px;top:626px;width:9px;height:9px;background:#ecc89c;"></div>
<div class="t" style="left:96.60px;top:625.33px;font-size:10.6px;line-height:10.6px;color:#e8e8e8;font-weight:bold;">6</div>
<svg style="left:121px;top:623px;" width="16" height="13" viewBox="0 0 16 13"><rect x="0.5" y="1" width="15" height="11" fill="#b8b8b8"/><rect x="4" y="0" width="8" height="1.5" fill="#1a1a1a"/><rect x="4" y="11.5" width="8" height="1.5" fill="#1a1a1a"/><path d="M2 2 L2 11 M14 2 L14 11" stroke="#8a8a8a" stroke-width="1.2" stroke-dasharray="1 1"/><rect x="3.8" y="2.5" width="8.4" height="8" fill="#0a0a0a"/><circle cx="6.3" cy="5.3" r="1.9" fill="#3a9ee8"/><circle cx="9.8" cy="5.6" r="1.7" fill="#e0603a"/><path d="M4.3 10 L8 6.8 L11.5 10 Z" fill="#50a830"/></svg>
<div class="t" style="left:139.50px;top:625.33px;font-size:10.6px;line-height:10.6px;color:#ececec;font-weight:bold;letter-spacing:-0.110px;">circleAnim1</div>
<div style="left:293px;top:625px;width:12px;height:12px;background:#545454;border:1px solid #474747;border-bottom:1px solid #8c8c8c;box-sizing:border-box;"></div>
<svg style="left:293px;top:627px;" width="12" height="7" viewBox="0 0 12 7"><path d="M0 4 L3 4 M9 4 L12 4" stroke="#ddd" stroke-width="1"/><path d="M3 4 Q6 0 9 4 Z" fill="#ddd"/><path d="M4.5 4 L7.5 4 L6 6.5 Z" fill="#ddd"/></svg>
<div style="left:307px;top:625px;width:11px;height:12px;background:#545454;border:1px solid #474747;border-bottom:1px solid #8c8c8c;box-sizing:border-box;"></div>
<div style="left:320px;top:625px;width:12px;height:12px;background:#545454;border:1px solid #474747;border-bottom:1px solid #8c8c8c;box-sizing:border-box;"></div>
<svg style="left:320px;top:624px;" width="12" height="13" viewBox="0 0 12 13"><path d="M1.5 12 L11 1.5" stroke="#eeeeee" stroke-width="1.7"/></svg>
<div style="left:360px;top:625px;width:11px;height:12px;background:#545454;border:1px solid #474747;border-bottom:1px solid #8c8c8c;box-sizing:border-box;"></div>
<div style="left:374px;top:625px;width:11px;height:12px;background:#545454;border:1px solid #474747;border-bottom:1px solid #8c8c8c;box-sizing:border-box;"></div>
<div style="left:387px;top:625px;width:11px;height:12px;background:#545454;border:1px solid #474747;border-bottom:1px solid #8c8c8c;box-sizing:border-box;"></div>
<svg style="left:496px;top:625px;" width="11" height="11" viewBox="0 0 11 11"><path d="M5.5 5.5 m-1.5 0 a1.5 1.5 0 1 1 3 0 a3 3 0 1 1 -6 0 a4.5 4.5 0 1 1 9 0" fill="none" stroke="#d0d0d0" stroke-width="1.2"/></svg>
<div style="left:512px;top:624px;width:79px;height:13px;background:linear-gradient(#585858,#484848);border:1px solid #2a2a2a;box-sizing:border-box;border-radius:2px;box-shadow:inset 0 1px 0 #666;"></div>
<div style="left:574px;top:626px;width:1px;height:9px;background:#3c3c3c;"></div>
<svg style="left:578px;top:628px;" width="8" height="6" viewBox="0 0 8 6"><path d="M0 0 L8 0 L4 5.5 Z" fill="#e6e6e6"/></svg>
<div class="t" style="left:518.00px;top:625.33px;font-size:10.6px;line-height:10.6px;color:#ececec;letter-spacing:-0.906px;">Ohne</div>
<div style="left:1129px;top:624px;width:134px;height:14px;background:#bf9268;border-top:1px solid #d4ae8a;box-sizing:border-box;"></div>
<div style="left:1px;top:638px;width:609px;height:15px;background:#535353;"></div>
<div style="left:1px;top:638px;width:609px;height:1px;background:#626262;"></div>
<div style="left:611px;top:638px;width:652px;height:1px;background:#646464;"></div>
<div style="left:5px;top:651px;width:13px;height:1px;background:#8a8a8a;"></div>
<svg style="left:5px;top:641px;" width="13" height="9" viewBox="0 0 13 9"><path d="M0.5 4.5 Q6.5 -1.5 12.5 4.5 Q6.5 10.5 0.5 4.5 Z" fill="#d8d8d8" stroke="#555" stroke-width="0.6"/><circle cx="6.5" cy="4.5" r="2.2" fill="#555"/><circle cx="6.5" cy="4.5" r="0.9" fill="#ddd"/></svg>
<div style="left:32px;top:640px;width:12px;height:12px;background:#545454;border:1px solid #474747;border-bottom:1px solid #8c8c8c;box-sizing:border-box;"></div>
<div style="left:46px;top:640px;width:11px;height:12px;background:#545454;border:1px solid #474747;border-bottom:1px solid #8c8c8c;box-sizing:border-box;"></div>
<svg style="left:67px;top:642px;" width="6" height="8" viewBox="0 0 6 8"><path d="M0 0 L6 4 L0 8 Z" fill="#8c8c8c"/></svg>
<div style="left:78px;top:641px;width:9px;height:9px;background:#ecc89c;"></div>
<div class="t" style="left:96.60px;top:640.33px;font-size:10.6px;line-height:10.6px;color:#e8e8e8;font-weight:bold;">7</div>
<svg style="left:121px;top:638px;" width="16" height="13" viewBox="0 0 16 13"><rect x="0.5" y="1" width="15" height="11" fill="#b8b8b8"/><rect x="4" y="0" width="8" height="1.5" fill="#1a1a1a"/><rect x="4" y="11.5" width="8" height="1.5" fill="#1a1a1a"/><path d="M2 2 L2 11 M14 2 L14 11" stroke="#8a8a8a" stroke-width="1.2" stroke-dasharray="1 1"/><rect x="3.8" y="2.5" width="8.4" height="8" fill="#0a0a0a"/><circle cx="6.3" cy="5.3" r="1.9" fill="#3a9ee8"/><circle cx="9.8" cy="5.6" r="1.7" fill="#e0603a"/><path d="M4.3 10 L8 6.8 L11.5 10 Z" fill="#50a830"/></svg>
<div class="t" style="left:139.50px;top:640.33px;font-size:10.6px;line-height:10.6px;color:#ececec;font-weight:bold;letter-spacing:-0.100px;">circle2</div>
<div style="left:293px;top:640px;width:12px;height:12px;background:#545454;border:1px solid #474747;border-bottom:1px solid #8c8c8c;box-sizing:border-box;"></div>
<svg style="left:293px;top:642px;" width="12" height="7" viewBox="0 0 12 7"><path d="M0 4 L3 4 M9 4 L12 4" stroke="#ddd" stroke-width="1"/><path d="M3 4 Q6 0 9 4 Z" fill="#ddd"/><path d="M4.5 4 L7.5 4 L6 6.5 Z" fill="#ddd"/></svg>
<div style="left:307px;top:640px;width:11px;height:12px;background:#545454;border:1px solid #474747;border-bottom:1px solid #8c8c8c;box-sizing:border-box;"></div>
<div style="left:320px;top:640px;width:12px;height:12px;background:#545454;border:1px solid #474747;border-bottom:1px solid #8c8c8c;box-sizing:border-box;"></div>
<svg style="left:320px;top:639px;" width="12" height="13" viewBox="0 0 12 13"><path d="M1.5 12 L11 1.5" stroke="#eeeeee" stroke-width="1.7"/></svg>
<div style="left:360px;top:640px;width:11px;height:12px;background:#545454;border:1px solid #474747;border-bottom:1px solid #8c8c8c;box-sizing:border-box;"></div>
<div style="left:374px;top:640px;width:11px;height:12px;background:#545454;border:1px solid #474747;border-bottom:1px solid #8c8c8c;box-sizing:border-box;"></div>
<div style="left:387px;top:640px;width:11px;height:12px;background:#545454;border:1px solid #474747;border-bottom:1px solid #8c8c8c;box-sizing:border-box;"></div>
<svg style="left:496px;top:640px;" width="11" height="11" viewBox="0 0 11 11"><path d="M5.5 5.5 m-1.5 0 a1.5 1.5 0 1 1 3 0 a3 3 0 1 1 -6 0 a4.5 4.5 0 1 1 9 0" fill="none" stroke="#d0d0d0" stroke-width="1.2"/></svg>
<div style="left:512px;top:639px;width:79px;height:13px;background:linear-gradient(#585858,#484848);border:1px solid #2a2a2a;box-sizing:border-box;border-radius:2px;box-shadow:inset 0 1px 0 #666;"></div>
<div style="left:574px;top:641px;width:1px;height:9px;background:#3c3c3c;"></div>
<svg style="left:578px;top:643px;" width="8" height="6" viewBox="0 0 8 6"><path d="M0 0 L8 0 L4 5.5 Z" fill="#e6e6e6"/></svg>
<div class="t" style="left:518.00px;top:640.33px;font-size:10.6px;line-height:10.6px;color:#ececec;letter-spacing:-0.906px;">Ohne</div>
<div style="left:1002px;top:639px;width:127px;height:14px;background:#bf9268;border-top:1px solid #d4ae8a;box-sizing:border-box;"></div>
<div style="left:1px;top:653px;width:609px;height:15px;background:#535353;"></div>
<div style="left:1px;top:653px;width:609px;height:1px;background:#626262;"></div>
<div style="left:611px;top:653px;width:652px;height:1px;background:#646464;"></div>
<div style="left:5px;top:666px;width:13px;height:1px;background:#8a8a8a;"></div>
<svg style="left:5px;top:656px;" width="13" height="9" viewBox="0 0 13 9"><path d="M0.5 4.5 Q6.5 -1.5 12.5 4.5 Q6.5 10.5 0.5 4.5 Z" fill="#d8d8d8" stroke="#555" stroke-width="0.6"/><circle cx="6.5" cy="4.5" r="2.2" fill="#555"/><circle cx="6.5" cy="4.5" r="0.9" fill="#ddd"/></svg>
<div style="left:32px;top:655px;width:12px;height:12px;background:#545454;border:1px solid #474747;border-bottom:1px solid #8c8c8c;box-sizing:border-box;"></div>
<div style="left:46px;top:655px;width:11px;height:12px;background:#545454;border:1px solid #474747;border-bottom:1px solid #8c8c8c;box-sizing:border-box;"></div>
<svg style="left:67px;top:657px;" width="6" height="8" viewBox="0 0 6 8"><path d="M0 0 L6 4 L0 8 Z" fill="#8c8c8c"/></svg>
<div style="left:78px;top:656px;width:9px;height:9px;background:#ecc89c;"></div>
<div class="t" style="left:96.60px;top:655.33px;font-size:10.6px;line-height:10.6px;color:#e8e8e8;font-weight:bold;">8</div>
<svg style="left:121px;top:653px;" width="16" height="13" viewBox="0 0 16 13"><rect x="0.5" y="1" width="15" height="11" fill="#b8b8b8"/><rect x="4" y="0" width="8" height="1.5" fill="#1a1a1a"/><rect x="4" y="11.5" width="8" height="1.5" fill="#1a1a1a"/><path d="M2 2 L2 11 M14 2 L14 11" stroke="#8a8a8a" stroke-width="1.2" stroke-dasharray="1 1"/><rect x="3.8" y="2.5" width="8.4" height="8" fill="#0a0a0a"/><circle cx="6.3" cy="5.3" r="1.9" fill="#3a9ee8"/><circle cx="9.8" cy="5.6" r="1.7" fill="#e0603a"/><path d="M4.3 10 L8 6.8 L11.5 10 Z" fill="#50a830"/></svg>
<div class="t" style="left:139.50px;top:655.33px;font-size:10.6px;line-height:10.6px;color:#ececec;font-weight:bold;letter-spacing:-0.100px;">circle2</div>
<div style="left:293px;top:655px;width:12px;height:12px;background:#545454;border:1px solid #474747;border-bottom:1px solid #8c8c8c;box-sizing:border-box;"></div>
<svg style="left:293px;top:657px;" width="12" height="7" viewBox="0 0 12 7"><path d="M0 4 L3 4 M9 4 L12 4" stroke="#ddd" stroke-width="1"/><path d="M3 4 Q6 0 9 4 Z" fill="#ddd"/><path d="M4.5 4 L7.5 4 L6 6.5 Z" fill="#ddd"/></svg>
<div style="left:307px;top:655px;width:11px;height:12px;background:#545454;border:1px solid #474747;border-bottom:1px solid #8c8c8c;box-sizing:border-box;"></div>
<div style="left:320px;top:655px;width:12px;height:12px;background:#545454;border:1px solid #474747;border-bottom:1px solid #8c8c8c;box-sizing:border-box;"></div>
<svg style="left:320px;top:654px;" width="12" height="13" viewBox="0 0 12 13"><path d="M1.5 12 L11 1.5" stroke="#eeeeee" stroke-width="1.7"/></svg>
<div style="left:360px;top:655px;width:11px;height:12px;background:#545454;border:1px solid #474747;border-bottom:1px solid #8c8c8c;box-sizing:border-box;"></div>
<div style="left:374px;top:655px;width:11px;height:12px;background:#545454;border:1px solid #474747;border-bottom:1px solid #8c8c8c;box-sizing:border-box;"></div>
<div style="left:387px;top:655px;width:11px;height:12px;background:#545454;border:1px solid #474747;border-bottom:1px solid #8c8c8c;box-sizing:border-box;"></div>
<svg style="left:496px;top:655px;" width="11" height="11" viewBox="0 0 11 11"><path d="M5.5 5.5 m-1.5 0 a1.5 1.5 0 1 1 3 0 a3 3 0 1 1 -6 0 a4.5 4.5 0 1 1 9 0" fill="none" stroke="#d0d0d0" stroke-width="1.2"/></svg>
<div style="left:512px;top:654px;width:79px;height:13px;background:linear-gradient(#585858,#484848);border:1px solid #2a2a2a;box-sizing:border-box;border-radius:2px;box-shadow:inset 0 1px 0 #666;"></div>
<div style="left:574px;top:656px;width:1px;height:9px;background:#3c3c3c;"></div>
<svg style="left:578px;top:658px;" width="8" height="6" viewBox="0 0 8 6"><path d="M0 0 L8 0 L4 5.5 Z" fill="#e6e6e6"/></svg>
<div class="t" style="left:518.00px;top:655.33px;font-size:10.6px;line-height:10.6px;color:#ececec;letter-spacing:-0.906px;">Ohne</div>
<div style="left:872px;top:654px;width:130px;height:14px;background:#bf9268;border-top:1px solid #d4ae8a;box-sizing:border-box;"></div>
<div style="left:1px;top:668px;width:609px;height:15px;background:#535353;"></div>
<div style="left:1px;top:668px;width:609px;height:1px;background:#626262;"></div>
<div style="left:611px;top:668px;width:652px;height:1px;background:#646464;"></div>
<div style="left:5px;top:681px;width:13px;height:1px;background:#8a8a8a;"></div>
<svg style="left:5px;top:671px;" width="13" height="9" viewBox="0 0 13 9"><path d="M0.5 4.5 Q6.5 -1.5 12.5 4.5 Q6.5 10.5 0.5 4.5 Z" fill="#d8d8d8" stroke="#555" stroke-width="0.6"/><circle cx="6.5" cy="4.5" r="2.2" fill="#555"/><circle cx="6.5" cy="4.5" r="0.9" fill="#ddd"/></svg>
<div style="left:32px;top:670px;width:12px;height:12px;background:#545454;border:1px solid #474747;border-bottom:1px solid #8c8c8c;box-sizing:border-box;"></div>
<div style="left:46px;top:670px;width:11px;height:12px;background:#545454;border:1px solid #474747;border-bottom:1px solid #8c8c8c;box-sizing:border-box;"></div>
<svg style="left:67px;top:672px;" width="6" height="8" viewBox="0 0 6 8"><path d="M0 0 L6 4 L0 8 Z" fill="#8c8c8c"/></svg>
<div style="left:78px;top:671px;width:9px;height:9px;background:#ecc89c;"></div>
<div class="t" style="left:96.60px;top:670.33px;font-size:10.6px;line-height:10.6px;color:#e8e8e8;font-weight:bold;">9</div>
<svg style="left:121px;top:668px;" width="16" height="13" viewBox="0 0 16 13"><rect x="0.5" y="1" width="15" height="11" fill="#b8b8b8"/><rect x="4" y="0" width="8" height="1.5" fill="#1a1a1a"/><rect x="4" y="11.5" width="8" height="1.5" fill="#1a1a1a"/><path d="M2 2 L2 11 M14 2 L14 11" stroke="#8a8a8a" stroke-width="1.2" stroke-dasharray="1 1"/><rect x="3.8" y="2.5" width="8.4" height="8" fill="#0a0a0a"/><circle cx="6.3" cy="5.3" r="1.9" fill="#3a9ee8"/><circle cx="9.8" cy="5.6" r="1.7" fill="#e0603a"/><path d="M4.3 10 L8 6.8 L11.5 10 Z" fill="#50a830"/></svg>
<div class="t" style="left:139.50px;top:670.33px;font-size:10.6px;line-height:10.6px;color:#ececec;font-weight:bold;letter-spacing:-0.100px;">circle2</div>
<div style="left:293px;top:670px;width:12px;height:12px;background:#545454;border:1px solid #474747;border-bottom:1px solid #8c8c8c;box-sizing:border-box;"></div>
<svg style="left:293px;top:672px;" width="12" height="7" viewBox="0 0 12 7"><path d="M0 4 L3 4 M9 4 L12 4" stroke="#ddd" stroke-width="1"/><path d="M3 4 Q6 0 9 4 Z" fill="#ddd"/><path d="M4.5 4 L7.5 4 L6 6.5 Z" fill="#ddd"/></svg>
<div style="left:307px;top:670px;width:11px;height:12px;background:#545454;border:1px solid #474747;border-bottom:1px solid #8c8c8c;box-sizing:border-box;"></div>
<div style="left:320px;top:670px;width:12px;height:12px;background:#545454;border:1px solid #474747;border-bottom:1px solid #8c8c8c;box-sizing:border-box;"></div>
<svg style="left:320px;top:669px;" width="12" height="13" viewBox="0 0 12 13"><path d="M1.5 12 L11 1.5" stroke="#eeeeee" stroke-width="1.7"/></svg>
<div style="left:360px;top:670px;width:11px;height:12px;background:#545454;border:1px solid #474747;border-bottom:1px solid #8c8c8c;box-sizing:border-box;"></div>
<div style="left:374px;top:670px;width:11px;height:12px;background:#545454;border:1px solid #474747;border-bottom:1px solid #8c8c8c;box-sizing:border-box;"></div>
<div style="left:387px;top:670px;width:11px;height:12px;background:#545454;border:1px solid #474747;border-bottom:1px solid #8c8c8c;box-sizing:border-box;"></div>
<svg style="left:496px;top:670px;" width="11" height="11" viewBox="0 0 11 11"><path d="M5.5 5.5 m-1.5 0 a1.5 1.5 0 1 1 3 0 a3 3 0 1 1 -6 0 a4.5 4.5 0 1 1 9 0" fill="none" stroke="#d0d0d0" stroke-width="1.2"/></svg>
<div style="left:512px;top:669px;width:79px;height:13px;background:linear-gradient(#585858,#484848);border:1px solid #2a2a2a;box-sizing:border-box;border-radius:2px;box-shadow:inset 0 1px 0 #666;"></div>
<div style="left:574px;top:671px;width:1px;height:9px;background:#3c3c3c;"></div>
<svg style="left:578px;top:673px;" width="8" height="6" viewBox="0 0 8 6"><path d="M0 0 L8 0 L4 5.5 Z" fill="#e6e6e6"/></svg>
<div class="t" style="left:518.00px;top:670.33px;font-size:10.6px;line-height:10.6px;color:#ececec;letter-spacing:-0.906px;">Ohne</div>
<div style="left:744px;top:669px;width:128px;height:14px;background:#bf9268;border-top:1px solid #d4ae8a;box-sizing:border-box;"></div>
<div style="left:1px;top:683px;width:609px;height:15px;background:#535353;"></div>
<div style="left:1px;top:683px;width:609px;height:1px;background:#626262;"></div>
<div style="left:611px;top:683px;width:652px;height:1px;background:#646464;"></div>
<div style="left:5px;top:696px;width:13px;height:1px;background:#8a8a8a;"></div>
<svg style="left:5px;top:686px;" width="13" height="9" viewBox="0 0 13 9"><path d="M0.5 4.5 Q6.5 -1.5 12.5 4.5 Q6.5 10.5 0.5 4.5 Z" fill="#d8d8d8" stroke="#555" stroke-width="0.6"/><circle cx="6.5" cy="4.5" r="2.2" fill="#555"/><circle cx="6.5" cy="4.5" r="0.9" fill="#ddd"/></svg>
<div style="left:32px;top:685px;width:12px;height:12px;background:#545454;border:1px solid #474747;border-bottom:1px solid #8c8c8c;box-sizing:border-box;"></div>
<div style="left:46px;top:685px;width:11px;height:12px;background:#545454;border:1px solid #474747;border-bottom:1px solid #8c8c8c;box-sizing:border-box;"></div>
<svg style="left:67px;top:687px;" width="6" height="8" viewBox="0 0 6 8"><path d="M0 0 L6 4 L0 8 Z" fill="#8c8c8c"/></svg>
<div style="left:78px;top:686px;width:9px;height:9px;background:#ecc89c;"></div>
<div class="t" style="left:96.60px;top:685.33px;font-size:10.6px;line-height:10.6px;color:#e8e8e8;font-weight:bold;">10</div>
<svg style="left:121px;top:683px;" width="16" height="13" viewBox="0 0 16 13"><rect x="0.5" y="1" width="15" height="11" fill="#b8b8b8"/><rect x="4" y="0" width="8" height="1.5" fill="#1a1a1a"/><rect x="4" y="11.5" width="8" height="1.5" fill="#1a1a1a"/><path d="M2 2 L2 11 M14 2 L14 11" stroke="#8a8a8a" stroke-width="1.2" stroke-dasharray="1 1"/><rect x="3.8" y="2.5" width="8.4" height="8" fill="#0a0a0a"/><circle cx="6.3" cy="5.3" r="1.9" fill="#3a9ee8"/><circle cx="9.8" cy="5.6" r="1.7" fill="#e0603a"/><path d="M4.3 10 L8 6.8 L11.5 10 Z" fill="#50a830"/></svg>
<div class="t" style="left:139.50px;top:685.33px;font-size:10.6px;line-height:10.6px;color:#ececec;font-weight:bold;letter-spacing:-0.100px;">circle1</div>
<div style="left:293px;top:685px;width:12px;height:12px;background:#545454;border:1px solid #474747;border-bottom:1px solid #8c8c8c;box-sizing:border-box;"></div>
<svg style="left:293px;top:687px;" width="12" height="7" viewBox="0 0 12 7"><path d="M0 4 L3 4 M9 4 L12 4" stroke="#ddd" stroke-width="1"/><path d="M3 4 Q6 0 9 4 Z" fill="#ddd"/><path d="M4.5 4 L7.5 4 L6 6.5 Z" fill="#ddd"/></svg>
<div style="left:307px;top:685px;width:11px;height:12px;background:#545454;border:1px solid #474747;border-bottom:1px solid #8c8c8c;box-sizing:border-box;"></div>
<div style="left:320px;top:685px;width:12px;height:12px;background:#545454;border:1px solid #474747;border-bottom:1px solid #8c8c8c;box-sizing:border-box;"></div>
<svg style="left:320px;top:684px;" width="12" height="13" viewBox="0 0 12 13"><path d="M1.5 12 L11 1.5" stroke="#eeeeee" stroke-width="1.7"/></svg>
<div style="left:360px;top:685px;width:11px;height:12px;background:#545454;border:1px solid #474747;border-bottom:1px solid #8c8c8c;box-sizing:border-box;"></div>
<div style="left:374px;top:685px;width:11px;height:12px;background:#545454;border:1px solid #474747;border-bottom:1px solid #8c8c8c;box-sizing:border-box;"></div>
<div style="left:387px;top:685px;width:11px;height:12px;background:#545454;border:1px solid #474747;border-bottom:1px solid #8c8c8c;box-sizing:border-box;"></div>
<svg style="left:496px;top:685px;" width="11" height="11" viewBox="0 0 11 11"><path d="M5.5 5.5 m-1.5 0 a1.5 1.5 0 1 1 3 0 a3 3 0 1 1 -6 0 a4.5 4.5 0 1 1 9 0" fill="none" stroke="#d0d0d0" stroke-width="1.2"/></svg>
<div style="left:512px;top:684px;width:79px;height:13px;background:linear-gradient(#585858,#484848);border:1px solid #2a2a2a;box-sizing:border-box;border-radius:2px;box-shadow:inset 0 1px 0 #666;"></div>
<div style="left:574px;top:686px;width:1px;height:9px;background:#3c3c3c;"></div>
<svg style="left:578px;top:688px;" width="8" height="6" viewBox="0 0 8 6"><path d="M0 0 L8 0 L4 5.5 Z" fill="#e6e6e6"/></svg>
<div class="t" style="left:518.00px;top:685.33px;font-size:10.6px;line-height:10.6px;color:#ececec;letter-spacing:-0.906px;">Ohne</div>
<div style="left:616px;top:684px;width:128px;height:14px;background:#bf9268;border-top:1px solid #d4ae8a;box-sizing:border-box;"></div>
<div style="left:1px;top:698px;width:609px;height:15px;background:#535353;"></div>
<div style="left:1px;top:698px;width:609px;height:1px;background:#626262;"></div>
<div style="left:611px;top:698px;width:652px;height:1px;background:#646464;"></div>
<div style="left:5px;top:711px;width:13px;height:1px;background:#8a8a8a;"></div>
<svg style="left:5px;top:701px;" width="13" height="9" viewBox="0 0 13 9"><path d="M0.5 4.5 Q6.5 -1.5 12.5 4.5 Q6.5 10.5 0.5 4.5 Z" fill="#d8d8d8" stroke="#555" stroke-width="0.6"/><circle cx="6.5" cy="4.5" r="2.2" fill="#555"/><circle cx="6.5" cy="4.5" r="0.9" fill="#ddd"/></svg>
<div style="left:32px;top:700px;width:12px;height:12px;background:#545454;border:1px solid #474747;border-bottom:1px solid #8c8c8c;box-sizing:border-box;"></div>
<div style="left:46px;top:700px;width:11px;height:12px;background:#545454;border:1px solid #474747;border-bottom:1px solid #8c8c8c;box-sizing:border-box;"></div>
<svg style="left:67px;top:702px;" width="6" height="8" viewBox="0 0 6 8"><path d="M0 0 L6 4 L0 8 Z" fill="#8c8c8c"/></svg>
<div style="left:78px;top:701px;width:9px;height:9px;background:#b6b6e0;"></div>
<div class="t" style="left:96.60px;top:700.33px;font-size:10.6px;line-height:10.6px;color:#e8e8e8;font-weight:bold;">11</div>
<svg style="left:121px;top:698px;" width="16" height="13" viewBox="0 0 16 13"><rect x="0.5" y="1" width="15" height="11" fill="#b8b8b8"/><rect x="4" y="0" width="8" height="1.5" fill="#1a1a1a"/><rect x="4" y="11.5" width="8" height="1.5" fill="#1a1a1a"/><path d="M2 2 L2 11 M14 2 L14 11" stroke="#8a8a8a" stroke-width="1.2" stroke-dasharray="1 1"/><rect x="3.8" y="2.5" width="8.4" height="8" fill="#0a0a0a"/><circle cx="6.3" cy="5.3" r="1.9" fill="#3a9ee8"/><circle cx="9.8" cy="5.6" r="1.7" fill="#e0603a"/><path d="M4.3 10 L8 6.8 L11.5 10 Z" fill="#50a830"/></svg>
<div class="t" style="left:139.50px;top:700.33px;font-size:10.6px;line-height:10.6px;color:#ececec;font-weight:bold;letter-spacing:-0.100px;">circle1</div>
<div style="left:293px;top:700px;width:12px;height:12px;background:#545454;border:1px solid #474747;border-bottom:1px solid #8c8c8c;box-sizing:border-box;"></div>
<svg style="left:293px;top:702px;" width="12" height="7" viewBox="0 0 12 7"><path d="M0 4 L3 4 M9 4 L12 4" stroke="#ddd" stroke-width="1"/><path d="M3 4 Q6 0 9 4 Z" fill="#ddd"/><path d="M4.5 4 L7.5 4 L6 6.5 Z" fill="#ddd"/></svg>
<div style="left:307px;top:700px;width:11px;height:12px;background:#545454;border:1px solid #474747;border-bottom:1px solid #8c8c8c;box-sizing:border-box;"></div>
<div style="left:320px;top:700px;width:12px;height:12px;background:#545454;border:1px solid #474747;border-bottom:1px solid #8c8c8c;box-sizing:border-box;"></div>
<svg style="left:320px;top:699px;" width="12" height="13" viewBox="0 0 12 13"><path d="M1.5 12 L11 1.5" stroke="#eeeeee" stroke-width="1.7"/></svg>
<div style="left:360px;top:700px;width:11px;height:12px;background:#545454;border:1px solid #474747;border-bottom:1px solid #8c8c8c;box-sizing:border-box;"></div>
<div style="left:374px;top:700px;width:11px;height:12px;background:#545454;border:1px solid #474747;border-bottom:1px solid #8c8c8c;box-sizing:border-box;"></div>
<div style="left:387px;top:700px;width:11px;height:12px;background:#545454;border:1px solid #474747;border-bottom:1px solid #8c8c8c;box-sizing:border-box;"></div>
<svg style="left:496px;top:700px;" width="11" height="11" viewBox="0 0 11 11"><path d="M5.5 5.5 m-1.5 0 a1.5 1.5 0 1 1 3 0 a3 3 0 1 1 -6 0 a4.5 4.5 0 1 1 9 0" fill="none" stroke="#d0d0d0" stroke-width="1.2"/></svg>
<div style="left:512px;top:699px;width:79px;height:13px;background:linear-gradient(#585858,#484848);border:1px solid #2a2a2a;box-sizing:border-box;border-radius:2px;box-shadow:inset 0 1px 0 #666;"></div>
<div style="left:574px;top:701px;width:1px;height:9px;background:#3c3c3c;"></div>
<svg style="left:578px;top:703px;" width="8" height="6" viewBox="0 0 8 6"><path d="M0 0 L8 0 L4 5.5 Z" fill="#e6e6e6"/></svg>
<div class="t" style="left:518.00px;top:700.33px;font-size:10.6px;line-height:10.6px;color:#ececec;letter-spacing:-0.906px;">Ohne</div>
<div style="left:1135px;top:699px;width:128px;height:14px;background:#7a7da8;border-top:1px solid #a0a4cc;box-sizing:border-box;"></div>
<div style="left:1px;top:714px;width:609px;height:15px;background:#535353;"></div>
<div style="left:1px;top:714px;width:609px;height:1px;background:#626262;"></div>
<div style="left:611px;top:714px;width:652px;height:1px;background:#646464;"></div>
<div style="left:5px;top:727px;width:13px;height:1px;background:#8a8a8a;"></div>
<svg style="left:5px;top:717px;" width="13" height="9" viewBox="0 0 13 9"><path d="M0.5 4.5 Q6.5 -1.5 12.5 4.5 Q6.5 10.5 0.5 4.5 Z" fill="#d8d8d8" stroke="#555" stroke-width="0.6"/><circle cx="6.5" cy="4.5" r="2.2" fill="#555"/><circle cx="6.5" cy="4.5" r="0.9" fill="#ddd"/></svg>
<div style="left:32px;top:716px;width:12px;height:12px;background:#545454;border:1px solid #474747;border-bottom:1px solid #8c8c8c;box-sizing:border-box;"></div>
<div style="left:46px;top:716px;width:11px;height:12px;background:#545454;border:1px solid #474747;border-bottom:1px solid #8c8c8c;box-sizing:border-box;"></div>
<svg style="left:67px;top:718px;" width="6" height="8" viewBox="0 0 6 8"><path d="M0 0 L6 4 L0 8 Z" fill="#8c8c8c"/></svg>
<div style="left:78px;top:717px;width:9px;height:9px;background:#b6b6e0;"></div>
<div class="t" style="left:96.60px;top:716.33px;font-size:10.6px;line-height:10.6px;color:#e8e8e8;font-weight:bold;">12</div>
<svg style="left:121px;top:714px;" width="16" height="13" viewBox="0 0 16 13"><rect x="0.5" y="1" width="15" height="11" fill="#b8b8b8"/><rect x="4" y="0" width="8" height="1.5" fill="#1a1a1a"/><rect x="4" y="11.5" width="8" height="1.5" fill="#1a1a1a"/><path d="M2 2 L2 11 M14 2 L14 11" stroke="#8a8a8a" stroke-width="1.2" stroke-dasharray="1 1"/><rect x="3.8" y="2.5" width="8.4" height="8" fill="#0a0a0a"/><circle cx="6.3" cy="5.3" r="1.9" fill="#3a9ee8"/><circle cx="9.8" cy="5.6" r="1.7" fill="#e0603a"/><path d="M4.3 10 L8 6.8 L11.5 10 Z" fill="#50a830"/></svg>
<div class="t" style="left:139.50px;top:716.33px;font-size:10.6px;line-height:10.6px;color:#ececec;font-weight:bold;letter-spacing:-0.110px;">circleAnim1</div>
<div style="left:293px;top:716px;width:12px;height:12px;background:#545454;border:1px solid #474747;border-bottom:1px solid #8c8c8c;box-sizing:border-box;"></div>
<svg style="left:293px;top:718px;" width="12" height="7" viewBox="0 0 12 7"><path d="M0 4 L3 4 M9 4 L12 4" stroke="#ddd" stroke-width="1"/><path d="M3 4 Q6 0 9 4 Z" fill="#ddd"/><path d="M4.5 4 L7.5 4 L6 6.5 Z" fill="#ddd"/></svg>
<div style="left:307px;top:716px;width:11px;height:12px;background:#545454;border:1px solid #474747;border-bottom:1px solid #8c8c8c;box-sizing:border-box;"></div>
<div style="left:320px;top:716px;width:12px;height:12px;background:#545454;border:1px solid #474747;border-bottom:1px solid #8c8c8c;box-sizing:border-box;"></div>
<svg style="left:320px;top:715px;" width="12" height="13" viewBox="0 0 12 13"><path d="M1.5 12 L11 1.5" stroke="#eeeeee" stroke-width="1.7"/></svg>
<div style="left:360px;top:716px;width:11px;height:12px;background:#545454;border:1px solid #474747;border-bottom:1px solid #8c8c8c;box-sizing:border-box;"></div>
<div style="left:374px;top:716px;width:11px;height:12px;background:#545454;border:1px solid #474747;border-bottom:1px solid #8c8c8c;box-sizing:border-box;"></div>
<div style="left:387px;top:716px;width:11px;height:12px;background:#545454;border:1px solid #474747;border-bottom:1px solid #8c8c8c;box-sizing:border-box;"></div>
<svg style="left:496px;top:716px;" width="11" height="11" viewBox="0 0 11 11"><path d="M5.5 5.5 m-1.5 0 a1.5 1.5 0 1 1 3 0 a3 3 0 1 1 -6 0 a4.5 4.5 0 1 1 9 0" fill="none" stroke="#d0d0d0" stroke-width="1.2"/></svg>
<div style="left:512px;top:715px;width:79px;height:13px;background:linear-gradient(#585858,#484848);border:1px solid #2a2a2a;box-sizing:border-box;border-radius:2px;box-shadow:inset 0 1px 0 #666;"></div>
<div style="left:574px;top:717px;width:1px;height:9px;background:#3c3c3c;"></div>
<svg style="left:578px;top:719px;" width="8" height="6" viewBox="0 0 8 6"><path d="M0 0 L8 0 L4 5.5 Z" fill="#e6e6e6"/></svg>
<div class="t" style="left:518.00px;top:716.33px;font-size:10.6px;line-height:10.6px;color:#ececec;letter-spacing:-0.906px;">Ohne</div>
<div style="left:940px;top:715px;width:195px;height:14px;background:#7a7da8;border-top:1px solid #a0a4cc;box-sizing:border-box;"></div>
<div style="left:1px;top:729px;width:609px;height:15px;background:#535353;"></div>
<div style="left:1px;top:729px;width:609px;height:1px;background:#626262;"></div>
<div style="left:611px;top:729px;width:652px;height:1px;background:#646464;"></div>
<div style="left:5px;top:742px;width:13px;height:1px;background:#8a8a8a;"></div>
<svg style="left:5px;top:732px;" width="13" height="9" viewBox="0 0 13 9"><path d="M0.5 4.5 Q6.5 -1.5 12.5 4.5 Q6.5 10.5 0.5 4.5 Z" fill="#d8d8d8" stroke="#555" stroke-width="0.6"/><circle cx="6.5" cy="4.5" r="2.2" fill="#555"/><circle cx="6.5" cy="4.5" r="0.9" fill="#ddd"/></svg>
<div style="left:32px;top:731px;width:12px;height:12px;background:#545454;border:1px solid #474747;border-bottom:1px solid #8c8c8c;box-sizing:border-box;"></div>
<div style="left:46px;top:731px;width:11px;height:12px;background:#545454;border:1px solid #474747;border-bottom:1px solid #8c8c8c;box-sizing:border-box;"></div>
<svg style="left:67px;top:733px;" width="6" height="8" viewBox="0 0 6 8"><path d="M0 0 L6 4 L0 8 Z" fill="#8c8c8c"/></svg>
<div style="left:78px;top:732px;width:9px;height:9px;background:#b6b6e0;"></div>
<div class="t" style="left:96.60px;top:731.33px;font-size:10.6px;line-height:10.6px;color:#e8e8e8;font-weight:bold;">13</div>
<svg style="left:121px;top:729px;" width="16" height="13" viewBox="0 0 16 13"><rect x="0.5" y="1" width="15" height="11" fill="#b8b8b8"/><rect x="4" y="0" width="8" height="1.5" fill="#1a1a1a"/><rect x="4" y="11.5" width="8" height="1.5" fill="#1a1a1a"/><path d="M2 2 L2 11 M14 2 L14 11" stroke="#8a8a8a" stroke-width="1.2" stroke-dasharray="1 1"/><rect x="3.8" y="2.5" width="8.4" height="8" fill="#0a0a0a"/><circle cx="6.3" cy="5.3" r="1.9" fill="#3a9ee8"/><circle cx="9.8" cy="5.6" r="1.7" fill="#e0603a"/><path d="M4.3 10 L8 6.8 L11.5 10 Z" fill="#50a830"/></svg>
<div class="t" style="left:139.50px;top:731.33px;font-size:10.6px;line-height:10.6px;color:#ececec;font-weight:bold;letter-spacing:-0.110px;">circleAnim2</div>
<div style="left:293px;top:731px;width:12px;height:12px;background:#545454;border:1px solid #474747;border-bottom:1px solid #8c8c8c;box-sizing:border-box;"></div>
<svg style="left:293px;top:733px;" width="12" height="7" viewBox="0 0 12 7"><path d="M0 4 L3 4 M9 4 L12 4" stroke="#ddd" stroke-width="1"/><path d="M3 4 Q6 0 9 4 Z" fill="#ddd"/><path d="M4.5 4 L7.5 4 L6 6.5 Z" fill="#ddd"/></svg>
<div style="left:307px;top:731px;width:11px;height:12px;background:#545454;border:1px solid #474747;border-bottom:1px solid #8c8c8c;box-sizing:border-box;"></div>
<div style="left:320px;top:731px;width:12px;height:12px;background:#545454;border:1px solid #474747;border-bottom:1px solid #8c8c8c;box-sizing:border-box;"></div>
<svg style="left:320px;top:730px;" width="12" height="13" viewBox="0 0 12 13"><path d="M1.5 12 L11 1.5" stroke="#eeeeee" stroke-width="1.7"/></svg>
<div style="left:360px;top:731px;width:11px;height:12px;background:#545454;border:1px solid #474747;border-bottom:1px solid #8c8c8c;box-sizing:border-box;"></div>
<div style="left:374px;top:731px;width:11px;height:12px;background:#545454;border:1px solid #474747;border-bottom:1px solid #8c8c8c;box-sizing:border-box;"></div>
<div style="left:387px;top:731px;width:11px;height:12px;background:#545454;border:1px solid #474747;border-bottom:1px solid #8c8c8c;box-sizing:border-box;"></div>
<svg style="left:496px;top:731px;" width="11" height="11" viewBox="0 0 11 11"><path d="M5.5 5.5 m-1.5 0 a1.5 1.5 0 1 1 3 0 a3 3 0 1 1 -6 0 a4.5 4.5 0 1 1 9 0" fill="none" stroke="#d0d0d0" stroke-width="1.2"/></svg>
<div style="left:512px;top:730px;width:79px;height:13px;background:linear-gradient(#585858,#484848);border:1px solid #2a2a2a;box-sizing:border-box;border-radius:2px;box-shadow:inset 0 1px 0 #666;"></div>
<div style="left:574px;top:732px;width:1px;height:9px;background:#3c3c3c;"></div>
<svg style="left:578px;top:734px;" width="8" height="6" viewBox="0 0 8 6"><path d="M0 0 L8 0 L4 5.5 Z" fill="#e6e6e6"/></svg>
<div class="t" style="left:518.00px;top:731.33px;font-size:10.6px;line-height:10.6px;color:#ececec;letter-spacing:-0.906px;">Ohne</div>
<div style="left:744px;top:730px;width:196px;height:14px;background:#7a7da8;border-top:1px solid #a0a4cc;box-sizing:border-box;"></div>
<div style="left:1px;top:744px;width:609px;height:15px;background:#535353;"></div>
<div style="left:1px;top:744px;width:609px;height:1px;background:#626262;"></div>
<div style="left:611px;top:744px;width:652px;height:1px;background:#646464;"></div>
<div style="left:5px;top:757px;width:13px;height:1px;background:#8a8a8a;"></div>
<svg style="left:5px;top:747px;" width="13" height="9" viewBox="0 0 13 9"><path d="M0.5 4.5 Q6.5 -1.5 12.5 4.5 Q6.5 10.5 0.5 4.5 Z" fill="#d8d8d8" stroke="#555" stroke-width="0.6"/><circle cx="6.5" cy="4.5" r="2.2" fill="#555"/><circle cx="6.5" cy="4.5" r="0.9" fill="#ddd"/></svg>
<div style="left:32px;top:746px;width:12px;height:12px;background:#545454;border:1px solid #474747;border-bottom:1px solid #8c8c8c;box-sizing:border-box;"></div>
<div style="left:46px;top:746px;width:11px;height:12px;background:#545454;border:1px solid #474747;border-bottom:1px solid #8c8c8c;box-sizing:border-box;"></div>
<svg style="left:67px;top:748px;" width="6" height="8" viewBox="0 0 6 8"><path d="M0 0 L6 4 L0 8 Z" fill="#8c8c8c"/></svg>
<div style="left:78px;top:747px;width:9px;height:9px;background:#b6b6e0;"></div>
<div class="t" style="left:96.60px;top:746.33px;font-size:10.6px;line-height:10.6px;color:#e8e8e8;font-weight:bold;">14</div>
<svg style="left:121px;top:744px;" width="16" height="13" viewBox="0 0 16 13"><rect x="0.5" y="1" width="15" height="11" fill="#b8b8b8"/><rect x="4" y="0" width="8" height="1.5" fill="#1a1a1a"/><rect x="4" y="11.5" width="8" height="1.5" fill="#1a1a1a"/><path d="M2 2 L2 11 M14 2 L14 11" stroke="#8a8a8a" stroke-width="1.2" stroke-dasharray="1 1"/><rect x="3.8" y="2.5" width="8.4" height="8" fill="#0a0a0a"/><circle cx="6.3" cy="5.3" r="1.9" fill="#3a9ee8"/><circle cx="9.8" cy="5.6" r="1.7" fill="#e0603a"/><path d="M4.3 10 L8 6.8 L11.5 10 Z" fill="#50a830"/></svg>
<div class="t" style="left:139.50px;top:746.33px;font-size:10.6px;line-height:10.6px;color:#ececec;font-weight:bold;letter-spacing:-0.100px;">circle2</div>
<div style="left:293px;top:746px;width:12px;height:12px;background:#545454;border:1px solid #474747;border-bottom:1px solid #8c8c8c;box-sizing:border-box;"></div>
<svg style="left:293px;top:748px;" width="12" height="7" viewBox="0 0 12 7"><path d="M0 4 L3 4 M9 4 L12 4" stroke="#ddd" stroke-width="1"/><path d="M3 4 Q6 0 9 4 Z" fill="#ddd"/><path d="M4.5 4 L7.5 4 L6 6.5 Z" fill="#ddd"/></svg>
<div style="left:307px;top:746px;width:11px;height:12px;background:#545454;border:1px solid #474747;border-bottom:1px solid #8c8c8c;box-sizing:border-box;"></div>
<div style="left:320px;top:746px;width:12px;height:12px;background:#545454;border:1px solid #474747;border-bottom:1px solid #8c8c8c;box-sizing:border-box;"></div>
<svg style="left:320px;top:745px;" width="12" height="13" viewBox="0 0 12 13"><path d="M1.5 12 L11 1.5" stroke="#eeeeee" stroke-width="1.7"/></svg>
<div style="left:360px;top:746px;width:11px;height:12px;background:#545454;border:1px solid #474747;border-bottom:1px solid #8c8c8c;box-sizing:border-box;"></div>
<div style="left:374px;top:746px;width:11px;height:12px;background:#545454;border:1px solid #474747;border-bottom:1px solid #8c8c8c;box-sizing:border-box;"></div>
<div style="left:387px;top:746px;width:11px;height:12px;background:#545454;border:1px solid #474747;border-bottom:1px solid #8c8c8c;box-sizing:border-box;"></div>
<svg style="left:496px;top:746px;" width="11" height="11" viewBox="0 0 11 11"><path d="M5.5 5.5 m-1.5 0 a1.5 1.5 0 1 1 3 0 a3 3 0 1 1 -6 0 a4.5 4.5 0 1 1 9 0" fill="none" stroke="#d0d0d0" stroke-width="1.2"/></svg>
<div style="left:512px;top:745px;width:79px;height:13px;background:linear-gradient(#585858,#484848);border:1px solid #2a2a2a;box-sizing:border-box;border-radius:2px;box-shadow:inset 0 1px 0 #666;"></div>
<div style="left:574px;top:747px;width:1px;height:9px;background:#3c3c3c;"></div>
<svg style="left:578px;top:749px;" width="8" height="6" viewBox="0 0 8 6"><path d="M0 0 L8 0 L4 5.5 Z" fill="#e6e6e6"/></svg>
<div class="t" style="left:518.00px;top:746.33px;font-size:10.6px;line-height:10.6px;color:#ececec;letter-spacing:-0.906px;">Ohne</div>
<div style="left:616px;top:745px;width:128px;height:14px;background:#7a7da8;border-top:1px solid #a0a4cc;box-sizing:border-box;"></div>
<div style="left:609px;top:498px;width:2px;height:279px;background:#2e2e2e;"></div>
<div style="left:611px;top:498px;width:5px;height:261px;background:#4e4e4e;"></div>
<div style="left:611px;top:503px;width:652px;height:2px;background:#222;"></div>
<div style="left:615px;top:505px;width:642px;height:7px;background:#9a9a9a;"></div>
<div style="left:611px;top:512px;width:652px;height:1px;background:#262626;"></div>
<div style="left:610px;top:503px;width:6px;height:9px;background:linear-gradient(#f0c040,#c08a10);border:1px solid #1a1a1a;box-sizing:border-box;"></div>
<div style="left:1257px;top:503px;width:6px;height:9px;background:linear-gradient(#f0c040,#c08a10);border:1px solid #1a1a1a;box-sizing:border-box;"></div>
<div style="left:611px;top:513px;width:652px;height:17px;background:#555;"></div>
<div style="left:616px;top:526px;width:1px;height:4px;background:#d0d0d0;"></div>
<div class="t" style="left:604.45px;top:514.83px;font-size:10px;line-height:10px;color:#cfcfcf;letter-spacing:0.013px;">0:00s</div>
<div style="left:680px;top:526px;width:1px;height:4px;background:#d0d0d0;"></div>
<div class="t" style="left:672.67px;top:514.83px;font-size:10px;line-height:10px;color:#cfcfcf;letter-spacing:-0.450px;">01s</div>
<div style="left:744px;top:526px;width:1px;height:4px;background:#d0d0d0;"></div>
<div class="t" style="left:736.74px;top:514.83px;font-size:10px;line-height:10px;color:#cfcfcf;letter-spacing:-0.450px;">02s</div>
<div style="left:808px;top:526px;width:1px;height:4px;background:#d0d0d0;"></div>
<div class="t" style="left:800.81px;top:514.83px;font-size:10px;line-height:10px;color:#cfcfcf;letter-spacing:-0.450px;">03s</div>
<div style="left:872px;top:526px;width:1px;height:4px;background:#d0d0d0;"></div>
<div class="t" style="left:864.88px;top:514.83px;font-size:10px;line-height:10px;color:#cfcfcf;letter-spacing:-0.450px;">04s</div>
<div style="left:937px;top:526px;width:1px;height:4px;background:#d0d0d0;"></div>
<div class="t" style="left:928.95px;top:514.83px;font-size:10px;line-height:10px;color:#cfcfcf;letter-spacing:-0.450px;">05s</div>
<div style="left:1001px;top:526px;width:1px;height:4px;background:#d0d0d0;"></div>
<div class="t" style="left:993.02px;top:514.83px;font-size:10px;line-height:10px;color:#cfcfcf;letter-spacing:-0.450px;">06s</div>
<div style="left:1065px;top:526px;width:1px;height:4px;background:#d0d0d0;"></div>
<div class="t" style="left:1057.09px;top:514.83px;font-size:10px;line-height:10px;color:#cfcfcf;letter-spacing:-0.450px;">07s</div>
<div style="left:1129px;top:526px;width:1px;height:4px;background:#d0d0d0;"></div>
<div class="t" style="left:1121.16px;top:514.83px;font-size:10px;line-height:10px;color:#cfcfcf;letter-spacing:-0.450px;">08s</div>
<div style="left:1193px;top:526px;width:1px;height:4px;background:#d0d0d0;"></div>
<div class="t" style="left:1185.23px;top:514.83px;font-size:10px;line-height:10px;color:#cfcfcf;letter-spacing:-0.450px;">09s</div>
<div style="left:1257px;top:526px;width:1px;height:4px;background:#d0d0d0;"></div>
<div class="t" style="left:1249.30px;top:514.83px;font-size:10px;line-height:10px;color:#cfcfcf;letter-spacing:-0.450px;">10s</div>
<div style="left:1263px;top:513px;width:17px;height:17px;background:#595959;"></div>
<div style="left:596px;top:512px;width:13px;height:18px;background:#595959;"></div>
<div style="left:611px;top:530px;width:652px;height:1px;background:#2a2a2a;"></div>
<div style="left:615px;top:531px;width:642px;height:13px;background:linear-gradient(#b0b0b0 0 1px,#9a9a9a 1px);"></div>
<div style="left:610px;top:530px;width:6px;height:14px;background:linear-gradient(#f0c040,#c08a10);border:1px solid #1a1a1a;box-sizing:border-box;"></div>
<div style="left:1257px;top:530px;width:6px;height:14px;background:linear-gradient(#f0c040,#c08a10);border:1px solid #1a1a1a;box-sizing:border-box;"></div>
<div style="left:611px;top:544px;width:652px;height:4px;background:#2c2c2c;"></div>
<div style="left:616px;top:545px;width:5px;height:2px;background:#44d024;"></div>
<div style="left:780px;top:545px;width:13px;height:2px;background:#44d024;"></div>
<div style="left:787px;top:504px;width:2px;height:255px;background:#d4574a;"></div>
<svg style="left:782px;top:516px;" width="12" height="14" viewBox="0 0 12 14"><path d="M1 2.5 Q1 0.5 6 0.5 Q11 0.5 11 2.5 Q11 7 6 13 Q1 7 1 2.5 Z" fill="#eeb22a" stroke="#5a4a20" stroke-width="0.7"/><path d="M4 2 L8 2 L7 4 L7 8 L5 8 L5 4 Z" fill="#b07a10"/><rect x="5.3" y="5" width="1.4" height="2" fill="#333"/></svg>
<div style="left:1263px;top:530px;width:17px;height:229px;background:#565656;"></div>
<svg style="left:1265px;top:531px;" width="12" height="13" viewBox="0 0 12 13"><path d="M0.5 0.5 L11.5 0.5 L11.5 7 L6 12.5 L0.5 7 Z" fill="#6a6a6a" stroke="#ddd" stroke-width="1"/></svg>
<svg style="left:1265px;top:549px;" width="13" height="13" viewBox="0 0 13 13"><circle cx="5" cy="5.5" r="4.3" fill="none" stroke="#ddd" stroke-width="1"/><rect x="6" y="5" width="6" height="5" fill="#666" stroke="#ddd"/><path d="M1 12 L4 7 L7 12 Z" fill="#ddd"/></svg>
<div style="left:1263px;top:564px;width:16px;height:1px;background:#333;"></div>
<svg style="left:1266px;top:570px;" width="10" height="6" viewBox="0 0 10 6"><path d="M0 6 L5 0 L10 6 Z" fill="#e6e6e6"/></svg>
<div style="left:1263px;top:578px;width:16px;height:181px;background:#484848;border-left:1px solid #333;box-sizing:border-box;"></div>
<div style="left:1264px;top:579px;width:14px;height:85px;background:#5c5c5c;border:1px solid #6e6e6e;box-sizing:border-box;"></div>
<svg style="left:1266px;top:749px;" width="10" height="6" viewBox="0 0 10 6"><path d="M0 0 L5 6 L10 0 Z" fill="#e6e6e6"/></svg>
<div style="left:1279px;top:498px;width:1px;height:279px;background:#2a2a2a;"></div>
<div style="left:1px;top:759px;width:1279px;height:18px;background:#555;border-top:1px solid #3c3c3c;box-sizing:border-box;"></div>
<div style="left:4px;top:761px;width:14px;height:14px;background:#333;border:1px solid #222;box-sizing:border-box;"></div>
<svg style="left:6px;top:763px;" width="11" height="10" viewBox="0 0 11 10"><rect x="0" y="0" width="7" height="6" fill="#bbb"/><rect x="3" y="3" width="7" height="6" fill="#ddd"/><path d="M5 6 L7 8 L10 3" stroke="#222" fill="none"/></svg>
<svg style="left:22px;top:762px;" width="12" height="12" viewBox="0 0 12 12"><circle cx="5" cy="5" r="4.3" fill="none" stroke="#ddd" stroke-width="1.1"/><rect x="5" y="5" width="6.5" height="6.5" fill="#555" stroke="#ddd"/></svg>
<div class="t" style="left:39.00px;top:763.19px;font-size:11px;line-height:11px;color:#d0d0d0;letter-spacing:0.630px;">{}</div>
<div style="left:292px;top:762px;width:197px;height:12px;background:linear-gradient(#5a5a5a,#4c4c4c);border:1px solid #2c2c2c;box-sizing:border-box;border-radius:2px;"></div>
<div class="t" style="left:309.20px;top:763.24px;font-size:10px;line-height:10px;color:#e4e4e4;letter-spacing:-0.017px;">Schalter/Modi aktivieren/deaktivieren</div>
<svg style="left:614px;top:766px;" width="9" height="5" viewBox="0 0 9 5"><path d="M0 5 L4 0.5 L9 5 Z" fill="#c8c8c8"/></svg>
<div style="left:634px;top:766px;width:42px;height:4px;background:#3c3c3c;border:1px solid #262626;box-sizing:border-box;border-radius:1px;"></div>
<svg style="left:633px;top:763px;" width="7" height="10" viewBox="0 0 7 10"><path d="M0.5 3.5 L3.5 0.5 L6.5 3.5 L6.5 9.5 L0.5 9.5 Z" fill="#6e6e6e" stroke="#222" stroke-width="0.9"/></svg>
<svg style="left:685px;top:763px;" width="17" height="9" viewBox="0 0 17 9"><path d="M0 9 L5 2 L8 5 L11 0 L17 9 Z" fill="#ccc"/></svg>
<div style="left:706px;top:760px;width:557px;height:17px;background:#474747;border-left:1px solid #333;box-sizing:border-box;"></div>
<svg style="left:712px;top:764px;" width="6" height="9" viewBox="0 0 6 9"><path d="M6 0 L0 4.5 L6 9 Z" fill="#777"/></svg>
<svg style="left:1253px;top:763px;" width="6" height="9" viewBox="0 0 6 9"><path d="M0 0 L6 4.5 L0 9 Z" fill="#777"/></svg>
<div style="left:1263px;top:759px;width:17px;height:18px;background:#555;"></div>
<div style="left:0px;top:476px;width:286px;height:1px;background:#666;"></div>
<div style="left:289px;top:476px;width:664px;height:1px;background:#666;"></div>
<div style="left:957px;top:476px;width:323px;height:1px;background:#666;"></div></body></html>
